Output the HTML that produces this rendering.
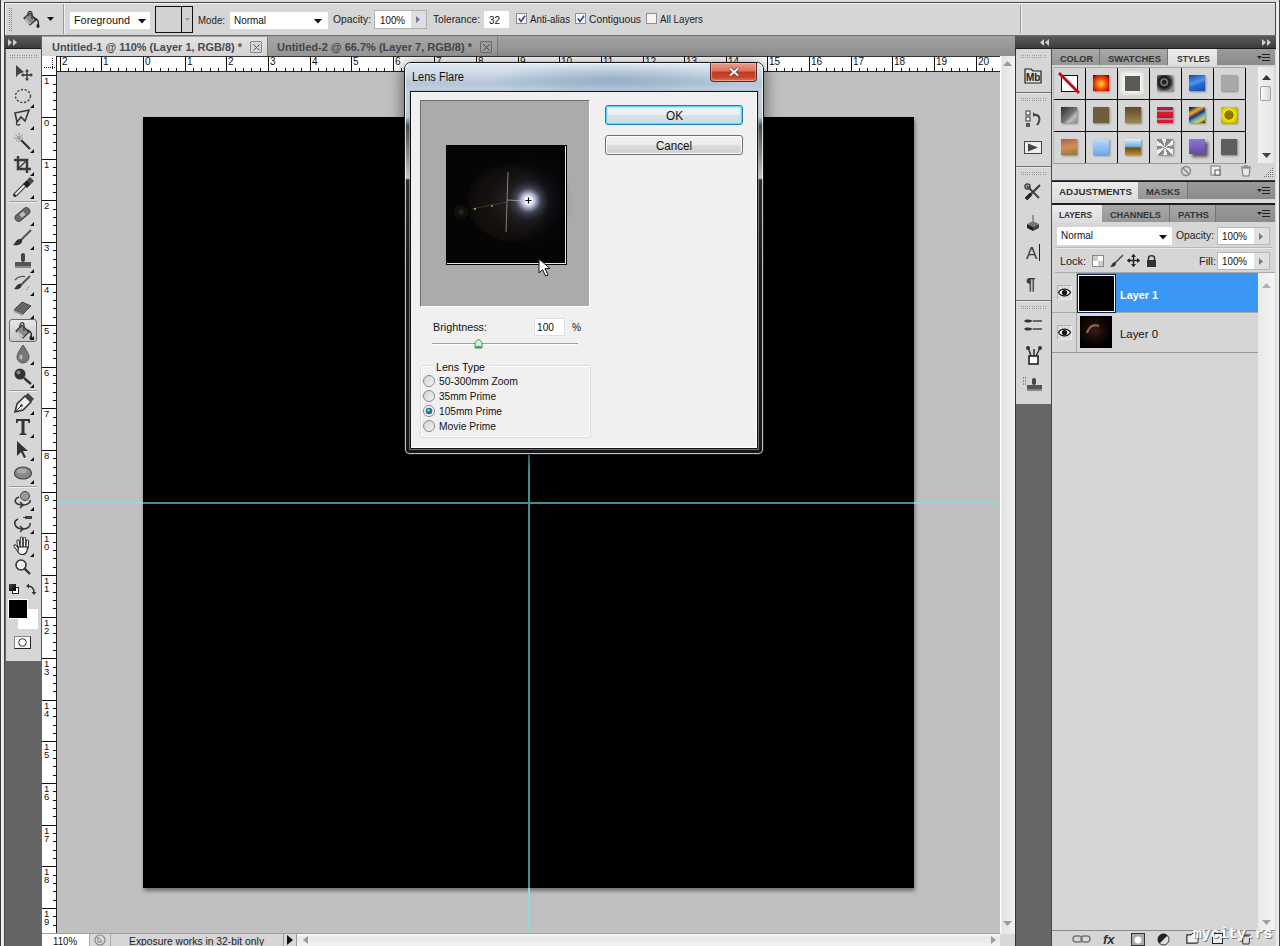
<!DOCTYPE html>
<html><head><meta charset="utf-8">
<style>
*{margin:0;padding:0;box-sizing:border-box}
html,body{width:1280px;height:946px;overflow:hidden;background:#d9d9d9;font-family:"Liberation Sans",sans-serif;font-size:11px;color:#111}
.a{position:absolute}
.t{position:absolute;white-space:nowrap;line-height:1}
svg{position:absolute;overflow:visible}
</style></head><body>
<div class="a" style="left:0px;top:0px;width:1280px;height:946px;background:#ececec;"></div>
<div class="a" style="left:0px;top:0px;width:1280px;height:2px;background:#dcdcdc;"></div>
<div class="a" style="left:0px;top:0px;width:1px;height:946px;background:#3c3c3c;"></div>
<div class="a" style="left:4px;top:2px;width:1px;height:944px;background:#444;"></div>
<div class="a" style="left:4px;top:2px;width:1272px;height:1px;background:#444;"></div>
<div class="a" style="left:1275px;top:2px;width:1px;height:944px;background:#444;"></div>
<div class="a" style="left:1279px;top:0px;width:1px;height:946px;background:#444;"></div>
<div class="a" style="left:5px;top:3px;width:1270px;height:32px;background:#d6d6d6;border-top:1px solid #f4f4f4;border-left:1px solid #f0f0f0"></div>
<div class="a" style="left:5px;top:35px;width:1271px;height:1px;background:#6e6e6e;"></div>
<div class="a" style="left:9px;top:8px;width:1px;height:1px;background:#8a8a8a;"></div>
<div class="a" style="left:11px;top:8px;width:1px;height:1px;background:#8a8a8a;"></div>
<div class="a" style="left:9px;top:10px;width:1px;height:1px;background:#8a8a8a;"></div>
<div class="a" style="left:11px;top:10px;width:1px;height:1px;background:#8a8a8a;"></div>
<div class="a" style="left:9px;top:12px;width:1px;height:1px;background:#8a8a8a;"></div>
<div class="a" style="left:11px;top:12px;width:1px;height:1px;background:#8a8a8a;"></div>
<div class="a" style="left:9px;top:14px;width:1px;height:1px;background:#8a8a8a;"></div>
<div class="a" style="left:11px;top:14px;width:1px;height:1px;background:#8a8a8a;"></div>
<div class="a" style="left:9px;top:16px;width:1px;height:1px;background:#8a8a8a;"></div>
<div class="a" style="left:11px;top:16px;width:1px;height:1px;background:#8a8a8a;"></div>
<div class="a" style="left:9px;top:18px;width:1px;height:1px;background:#8a8a8a;"></div>
<div class="a" style="left:11px;top:18px;width:1px;height:1px;background:#8a8a8a;"></div>
<div class="a" style="left:9px;top:20px;width:1px;height:1px;background:#8a8a8a;"></div>
<div class="a" style="left:11px;top:20px;width:1px;height:1px;background:#8a8a8a;"></div>
<div class="a" style="left:9px;top:22px;width:1px;height:1px;background:#8a8a8a;"></div>
<div class="a" style="left:11px;top:22px;width:1px;height:1px;background:#8a8a8a;"></div>
<div class="a" style="left:9px;top:24px;width:1px;height:1px;background:#8a8a8a;"></div>
<div class="a" style="left:11px;top:24px;width:1px;height:1px;background:#8a8a8a;"></div>
<div class="a" style="left:9px;top:26px;width:1px;height:1px;background:#8a8a8a;"></div>
<div class="a" style="left:11px;top:26px;width:1px;height:1px;background:#8a8a8a;"></div>
<div class="a" style="left:9px;top:28px;width:1px;height:1px;background:#8a8a8a;"></div>
<div class="a" style="left:11px;top:28px;width:1px;height:1px;background:#8a8a8a;"></div>
<div class="a" style="left:9px;top:30px;width:1px;height:1px;background:#8a8a8a;"></div>
<div class="a" style="left:11px;top:30px;width:1px;height:1px;background:#8a8a8a;"></div>
<svg style="left:17px;top:8px" width="26" height="22" viewBox="0 0 26 22">
<path d="M7 10 L13 5 L19 12 L13 17 Z" fill="#8a8a8a" stroke="#333" stroke-width="1.2"/>
<path d="M8 11 L13 16" stroke="#bbb" stroke-width="2"/>
<path d="M11 8 C10 3 14 2 15 5 L15 11" fill="none" stroke="#333" stroke-width="1.2"/>
<path d="M17 10 C21 11 22 14 21 17" fill="none" stroke="#222" stroke-width="1.5"/>
<ellipse cx="21" cy="18" rx="1.6" ry="2" fill="#222"/>
</svg>
<svg style="left:47px;top:17px" width="8" height="5"><path d="M0 0 H7 L3.5 4 Z" fill="#111"/></svg>
<div class="a" style="left:63px;top:4px;width:1px;height:30px;background:#9a9a9a;"></div>
<div class="a" style="left:64px;top:4px;width:1px;height:30px;background:#efefef;"></div>
<div class="a" style="left:70px;top:12px;width:80px;height:17px;background:#fff;"></div>
<div class="t" style="left:74px;top:14.69px;font-size:11px;color:#111;transform:scaleX(0.985);transform-origin:0 0;">Foreground</div>
<svg style="left:138px;top:19px" width="9" height="5"><path d="M0 0 H8 L4 4.5 Z" fill="#111"/></svg>
<div class="a" style="left:155px;top:6px;width:38px;height:27px;background:#d2d2d2;border:1px solid #111"></div>
<div class="a" style="left:181px;top:6px;width:1px;height:27px;background:#111;"></div>
<svg style="left:185px;top:18px" width="6" height="4"><path d="M0 0 H5 L2.5 3 Z" fill="#999"/></svg>
<div class="t" style="left:198px;top:14.69px;font-size:11px;color:#222;transform:scaleX(0.883);transform-origin:0 0;">Mode:</div>
<div class="a" style="left:230px;top:12px;width:98px;height:17px;background:#fff;"></div>
<div class="t" style="left:234px;top:14.69px;font-size:11px;color:#111;transform:scaleX(0.903);transform-origin:0 0;">Normal</div>
<svg style="left:314px;top:19px" width="9" height="5"><path d="M0 0 H8 L4 4.5 Z" fill="#111"/></svg>
<div class="t" style="left:333px;top:13.69px;font-size:11px;color:#222;transform:scaleX(0.942);transform-origin:0 0;">Opacity:</div>
<div class="a" style="left:374px;top:10px;width:53px;height:19px;background:#cfcfcf;border:1px solid #b0b0b0"></div>
<div class="a" style="left:375px;top:11px;width:36px;height:17px;background:#fff;"></div>
<div class="t" style="left:380px;top:14.69px;font-size:11px;color:#111;transform:scaleX(0.889);transform-origin:0 0;">100%</div>
<div class="a" style="left:411px;top:11px;width:15px;height:17px;background:#dedede;"></div>
<svg style="left:416px;top:16px" width="5" height="7"><path d="M0 0 L4 3.5 L0 7 Z" fill="#6a7a9a"/></svg>
<div class="t" style="left:433px;top:13.69px;font-size:11px;color:#222;transform:scaleX(0.926);transform-origin:0 0;">Tolerance:</div>
<div class="a" style="left:484px;top:11px;width:25px;height:17px;background:#fff;"></div>
<div class="t" style="left:489px;top:14.69px;font-size:11px;color:#111;transform:scaleX(0.899);transform-origin:0 0;">32</div>
<div class="a" style="left:516px;top:13px;width:11px;height:11px;background:#f4f4f4;border:1px solid #8f8f8f"></div>
<svg style="left:518px;top:15px" width="8" height="8"><path d="M0.8 3.5 L3 6.5 L7 0.8" fill="none" stroke="#2a3f8a" stroke-width="1.5"/></svg>
<div class="t" style="left:530px;top:13.69px;font-size:11px;color:#222;transform:scaleX(0.884);transform-origin:0 0;">Anti-alias</div>
<div class="a" style="left:575px;top:13px;width:11px;height:11px;background:#f4f4f4;border:1px solid #8f8f8f"></div>
<svg style="left:577px;top:15px" width="8" height="8"><path d="M0.8 3.5 L3 6.5 L7 0.8" fill="none" stroke="#2a3f8a" stroke-width="1.5"/></svg>
<div class="t" style="left:589px;top:13.69px;font-size:11px;color:#222;transform:scaleX(0.934);transform-origin:0 0;">Contiguous</div>
<div class="a" style="left:646px;top:13px;width:11px;height:11px;background:#f4f4f4;border:1px solid #8f8f8f"></div>
<div class="t" style="left:660px;top:13.69px;font-size:11px;color:#222;transform:scaleX(0.890);transform-origin:0 0;">All Layers</div>
<div class="a" style="left:1020px;top:5px;width:1px;height:28px;background:#9a9a9a;"></div>
<div class="a" style="left:1021px;top:5px;width:1px;height:28px;background:#eeeeee;"></div>
<div class="a" style="left:5px;top:36px;width:37px;height:910px;background:#656565;"></div>
<div class="a" style="left:5px;top:36px;width:36px;height:12px;background:linear-gradient(#595959,#3c3c3c);"></div>
<div class="a" style="left:5px;top:48px;width:36px;height:1px;background:#1e1e1e;"></div>
<svg style="left:8px;top:39px" width="12" height="8"><path d="M0 0 L4 3.5 L0 7Z M5 0 L9 3.5 L5 7Z" fill="#cfcfcf"/></svg>
<div class="a" style="left:6px;top:49px;width:35px;height:612px;background:#d6d6d6;"></div>
<div class="a" style="left:41px;top:49px;width:1px;height:612px;background:#555;"></div>
<div class="a" style="left:42px;top:36px;width:973px;height:20px;background:linear-gradient(#a2a2a2,#8f8f8f);"></div>
<div class="a" style="left:42px;top:37px;width:226px;height:19px;background:linear-gradient(#e2e2e2,#d4d4d4);"></div>
<div class="t" style="left:52px;top:41.69px;font-size:11px;color:#474b53;font-weight:bold;transform:scaleX(0.994);transform-origin:0 0;">Untitled-1 @ 110% (Layer 1, RGB/8) *</div>
<div class="a" style="left:250px;top:41px;width:12px;height:12px;background:#d6d6d6;border:1px solid #8a8a8a;border-radius:1px"></div>
<svg style="left:253px;top:44px" width="7" height="7"><path d="M0.5 0.5 L6.5 6.5 M6.5 0.5 L0.5 6.5" stroke="#555" stroke-width="1"/></svg>
<div class="a" style="left:268px;top:37px;width:229px;height:19px;background:linear-gradient(#a6a6a6,#949494);"></div>
<div class="a" style="left:267px;top:37px;width:1px;height:19px;background:#7a7a7a;"></div>
<div class="a" style="left:497px;top:37px;width:1px;height:19px;background:#7a7a7a;"></div>
<div class="t" style="left:277px;top:41.69px;font-size:11px;color:#42454a;font-weight:bold;transform:scaleX(1.001);transform-origin:0 0;">Untitled-2 @ 66.7% (Layer 7, RGB/8) *</div>
<div class="a" style="left:480px;top:41px;width:12px;height:12px;background:#9c9c9c;border:1px solid #6a6a6a;border-radius:1px"></div>
<svg style="left:483px;top:44px" width="7" height="7"><path d="M0.5 0.5 L6.5 6.5 M6.5 0.5 L0.5 6.5" stroke="#444" stroke-width="1"/></svg>
<div class="a" style="left:42px;top:56px;width:958px;height:15px;background:#fff;"></div>
<div class="a" style="left:42px;top:56px;width:958px;height:1px;background:#333;"></div>
<div class="a" style="left:42px;top:71px;width:958px;height:1px;background:#222;"></div>
<div class="a" style="left:42px;top:71px;width:15px;height:862px;background:#fff;"></div>
<div class="a" style="left:56px;top:71px;width:1px;height:862px;background:#222;"></div>
<div class="a" style="left:42px;top:56px;width:15px;height:15px;background:#fff;"></div>
<div class="a" style="left:56px;top:56px;width:1px;height:15px;background:#222;"></div>
<div class="a" style="left:44px;top:67px;width:1px;height:1px;background:#222;"></div>
<div class="a" style="left:46px;top:67px;width:1px;height:1px;background:#222;"></div>
<div class="a" style="left:48px;top:67px;width:1px;height:1px;background:#222;"></div>
<div class="a" style="left:50px;top:67px;width:1px;height:1px;background:#222;"></div>
<div class="a" style="left:52px;top:67px;width:1px;height:1px;background:#222;"></div>
<div class="a" style="left:54px;top:67px;width:1px;height:1px;background:#222;"></div>
<div class="a" style="left:52px;top:58px;width:1px;height:1px;background:#222;"></div>
<div class="a" style="left:52px;top:60px;width:1px;height:1px;background:#222;"></div>
<div class="a" style="left:52px;top:62px;width:1px;height:1px;background:#222;"></div>
<div class="a" style="left:52px;top:64px;width:1px;height:1px;background:#222;"></div>
<div class="a" style="left:52px;top:66px;width:1px;height:1px;background:#222;"></div>
<div class="a" style="left:52px;top:68px;width:1px;height:1px;background:#222;"></div>
<div class="a" style="left:60px;top:56px;width:1px;height:15px;background:#111;"></div>
<div class="a" style="left:68px;top:68px;width:1px;height:3px;background:#111;"></div>
<div class="a" style="left:76px;top:68px;width:1px;height:3px;background:#111;"></div>
<div class="a" style="left:85px;top:68px;width:1px;height:3px;background:#111;"></div>
<div class="a" style="left:93px;top:68px;width:1px;height:3px;background:#111;"></div>
<div class="t" style="left:62px;top:56.53px;font-size:10px;color:#111;">2</div>
<div class="a" style="left:101px;top:56px;width:1px;height:15px;background:#111;"></div>
<div class="a" style="left:110px;top:68px;width:1px;height:3px;background:#111;"></div>
<div class="a" style="left:118px;top:68px;width:1px;height:3px;background:#111;"></div>
<div class="a" style="left:126px;top:68px;width:1px;height:3px;background:#111;"></div>
<div class="a" style="left:135px;top:68px;width:1px;height:3px;background:#111;"></div>
<div class="t" style="left:103px;top:56.53px;font-size:10px;color:#111;">1</div>
<div class="a" style="left:143px;top:56px;width:1px;height:15px;background:#111;"></div>
<div class="a" style="left:151px;top:68px;width:1px;height:3px;background:#111;"></div>
<div class="a" style="left:160px;top:68px;width:1px;height:3px;background:#111;"></div>
<div class="a" style="left:168px;top:68px;width:1px;height:3px;background:#111;"></div>
<div class="a" style="left:176px;top:68px;width:1px;height:3px;background:#111;"></div>
<div class="t" style="left:145px;top:56.53px;font-size:10px;color:#111;">0</div>
<div class="a" style="left:185px;top:56px;width:1px;height:15px;background:#111;"></div>
<div class="a" style="left:193px;top:68px;width:1px;height:3px;background:#111;"></div>
<div class="a" style="left:201px;top:68px;width:1px;height:3px;background:#111;"></div>
<div class="a" style="left:210px;top:68px;width:1px;height:3px;background:#111;"></div>
<div class="a" style="left:218px;top:68px;width:1px;height:3px;background:#111;"></div>
<div class="t" style="left:187px;top:56.53px;font-size:10px;color:#111;">1</div>
<div class="a" style="left:226px;top:56px;width:1px;height:15px;background:#111;"></div>
<div class="a" style="left:235px;top:68px;width:1px;height:3px;background:#111;"></div>
<div class="a" style="left:243px;top:68px;width:1px;height:3px;background:#111;"></div>
<div class="a" style="left:251px;top:68px;width:1px;height:3px;background:#111;"></div>
<div class="a" style="left:260px;top:68px;width:1px;height:3px;background:#111;"></div>
<div class="t" style="left:228px;top:56.53px;font-size:10px;color:#111;">2</div>
<div class="a" style="left:268px;top:56px;width:1px;height:15px;background:#111;"></div>
<div class="a" style="left:276px;top:68px;width:1px;height:3px;background:#111;"></div>
<div class="a" style="left:285px;top:68px;width:1px;height:3px;background:#111;"></div>
<div class="a" style="left:293px;top:68px;width:1px;height:3px;background:#111;"></div>
<div class="a" style="left:301px;top:68px;width:1px;height:3px;background:#111;"></div>
<div class="t" style="left:270px;top:56.53px;font-size:10px;color:#111;">3</div>
<div class="a" style="left:310px;top:56px;width:1px;height:15px;background:#111;"></div>
<div class="a" style="left:318px;top:68px;width:1px;height:3px;background:#111;"></div>
<div class="a" style="left:326px;top:68px;width:1px;height:3px;background:#111;"></div>
<div class="a" style="left:334px;top:68px;width:1px;height:3px;background:#111;"></div>
<div class="a" style="left:343px;top:68px;width:1px;height:3px;background:#111;"></div>
<div class="t" style="left:312px;top:56.53px;font-size:10px;color:#111;">4</div>
<div class="a" style="left:351px;top:56px;width:1px;height:15px;background:#111;"></div>
<div class="a" style="left:359px;top:68px;width:1px;height:3px;background:#111;"></div>
<div class="a" style="left:368px;top:68px;width:1px;height:3px;background:#111;"></div>
<div class="a" style="left:376px;top:68px;width:1px;height:3px;background:#111;"></div>
<div class="a" style="left:384px;top:68px;width:1px;height:3px;background:#111;"></div>
<div class="t" style="left:353px;top:56.53px;font-size:10px;color:#111;">5</div>
<div class="a" style="left:393px;top:56px;width:1px;height:15px;background:#111;"></div>
<div class="a" style="left:401px;top:68px;width:1px;height:3px;background:#111;"></div>
<div class="a" style="left:409px;top:68px;width:1px;height:3px;background:#111;"></div>
<div class="a" style="left:418px;top:68px;width:1px;height:3px;background:#111;"></div>
<div class="a" style="left:426px;top:68px;width:1px;height:3px;background:#111;"></div>
<div class="t" style="left:395px;top:56.53px;font-size:10px;color:#111;">6</div>
<div class="a" style="left:434px;top:56px;width:1px;height:15px;background:#111;"></div>
<div class="a" style="left:443px;top:68px;width:1px;height:3px;background:#111;"></div>
<div class="a" style="left:451px;top:68px;width:1px;height:3px;background:#111;"></div>
<div class="a" style="left:459px;top:68px;width:1px;height:3px;background:#111;"></div>
<div class="a" style="left:468px;top:68px;width:1px;height:3px;background:#111;"></div>
<div class="t" style="left:436px;top:56.53px;font-size:10px;color:#111;">7</div>
<div class="a" style="left:476px;top:56px;width:1px;height:15px;background:#111;"></div>
<div class="a" style="left:484px;top:68px;width:1px;height:3px;background:#111;"></div>
<div class="a" style="left:493px;top:68px;width:1px;height:3px;background:#111;"></div>
<div class="a" style="left:501px;top:68px;width:1px;height:3px;background:#111;"></div>
<div class="a" style="left:509px;top:68px;width:1px;height:3px;background:#111;"></div>
<div class="t" style="left:478px;top:56.53px;font-size:10px;color:#111;">8</div>
<div class="a" style="left:518px;top:56px;width:1px;height:15px;background:#111;"></div>
<div class="a" style="left:526px;top:68px;width:1px;height:3px;background:#111;"></div>
<div class="a" style="left:534px;top:68px;width:1px;height:3px;background:#111;"></div>
<div class="a" style="left:543px;top:68px;width:1px;height:3px;background:#111;"></div>
<div class="a" style="left:551px;top:68px;width:1px;height:3px;background:#111;"></div>
<div class="t" style="left:520px;top:56.53px;font-size:10px;color:#111;">9</div>
<div class="a" style="left:559px;top:56px;width:1px;height:15px;background:#111;"></div>
<div class="a" style="left:568px;top:68px;width:1px;height:3px;background:#111;"></div>
<div class="a" style="left:576px;top:68px;width:1px;height:3px;background:#111;"></div>
<div class="a" style="left:584px;top:68px;width:1px;height:3px;background:#111;"></div>
<div class="a" style="left:593px;top:68px;width:1px;height:3px;background:#111;"></div>
<div class="t" style="left:561px;top:56.53px;font-size:10px;color:#111;">10</div>
<div class="a" style="left:601px;top:56px;width:1px;height:15px;background:#111;"></div>
<div class="a" style="left:609px;top:68px;width:1px;height:3px;background:#111;"></div>
<div class="a" style="left:618px;top:68px;width:1px;height:3px;background:#111;"></div>
<div class="a" style="left:626px;top:68px;width:1px;height:3px;background:#111;"></div>
<div class="a" style="left:634px;top:68px;width:1px;height:3px;background:#111;"></div>
<div class="t" style="left:603px;top:56.53px;font-size:10px;color:#111;">11</div>
<div class="a" style="left:643px;top:56px;width:1px;height:15px;background:#111;"></div>
<div class="a" style="left:651px;top:68px;width:1px;height:3px;background:#111;"></div>
<div class="a" style="left:659px;top:68px;width:1px;height:3px;background:#111;"></div>
<div class="a" style="left:668px;top:68px;width:1px;height:3px;background:#111;"></div>
<div class="a" style="left:676px;top:68px;width:1px;height:3px;background:#111;"></div>
<div class="t" style="left:645px;top:56.53px;font-size:10px;color:#111;">12</div>
<div class="a" style="left:684px;top:56px;width:1px;height:15px;background:#111;"></div>
<div class="a" style="left:693px;top:68px;width:1px;height:3px;background:#111;"></div>
<div class="a" style="left:701px;top:68px;width:1px;height:3px;background:#111;"></div>
<div class="a" style="left:709px;top:68px;width:1px;height:3px;background:#111;"></div>
<div class="a" style="left:717px;top:68px;width:1px;height:3px;background:#111;"></div>
<div class="t" style="left:686px;top:56.53px;font-size:10px;color:#111;">13</div>
<div class="a" style="left:726px;top:56px;width:1px;height:15px;background:#111;"></div>
<div class="a" style="left:734px;top:68px;width:1px;height:3px;background:#111;"></div>
<div class="a" style="left:742px;top:68px;width:1px;height:3px;background:#111;"></div>
<div class="a" style="left:751px;top:68px;width:1px;height:3px;background:#111;"></div>
<div class="a" style="left:759px;top:68px;width:1px;height:3px;background:#111;"></div>
<div class="t" style="left:728px;top:56.53px;font-size:10px;color:#111;">14</div>
<div class="a" style="left:767px;top:56px;width:1px;height:15px;background:#111;"></div>
<div class="a" style="left:776px;top:68px;width:1px;height:3px;background:#111;"></div>
<div class="a" style="left:784px;top:68px;width:1px;height:3px;background:#111;"></div>
<div class="a" style="left:792px;top:68px;width:1px;height:3px;background:#111;"></div>
<div class="a" style="left:801px;top:68px;width:1px;height:3px;background:#111;"></div>
<div class="t" style="left:769px;top:56.53px;font-size:10px;color:#111;">15</div>
<div class="a" style="left:809px;top:56px;width:1px;height:15px;background:#111;"></div>
<div class="a" style="left:817px;top:68px;width:1px;height:3px;background:#111;"></div>
<div class="a" style="left:826px;top:68px;width:1px;height:3px;background:#111;"></div>
<div class="a" style="left:834px;top:68px;width:1px;height:3px;background:#111;"></div>
<div class="a" style="left:842px;top:68px;width:1px;height:3px;background:#111;"></div>
<div class="t" style="left:811px;top:56.53px;font-size:10px;color:#111;">16</div>
<div class="a" style="left:851px;top:56px;width:1px;height:15px;background:#111;"></div>
<div class="a" style="left:859px;top:68px;width:1px;height:3px;background:#111;"></div>
<div class="a" style="left:867px;top:68px;width:1px;height:3px;background:#111;"></div>
<div class="a" style="left:876px;top:68px;width:1px;height:3px;background:#111;"></div>
<div class="a" style="left:884px;top:68px;width:1px;height:3px;background:#111;"></div>
<div class="t" style="left:853px;top:56.53px;font-size:10px;color:#111;">17</div>
<div class="a" style="left:892px;top:56px;width:1px;height:15px;background:#111;"></div>
<div class="a" style="left:901px;top:68px;width:1px;height:3px;background:#111;"></div>
<div class="a" style="left:909px;top:68px;width:1px;height:3px;background:#111;"></div>
<div class="a" style="left:917px;top:68px;width:1px;height:3px;background:#111;"></div>
<div class="a" style="left:926px;top:68px;width:1px;height:3px;background:#111;"></div>
<div class="t" style="left:894px;top:56.53px;font-size:10px;color:#111;">18</div>
<div class="a" style="left:934px;top:56px;width:1px;height:15px;background:#111;"></div>
<div class="a" style="left:942px;top:68px;width:1px;height:3px;background:#111;"></div>
<div class="a" style="left:951px;top:68px;width:1px;height:3px;background:#111;"></div>
<div class="a" style="left:959px;top:68px;width:1px;height:3px;background:#111;"></div>
<div class="a" style="left:967px;top:68px;width:1px;height:3px;background:#111;"></div>
<div class="t" style="left:936px;top:56.53px;font-size:10px;color:#111;">19</div>
<div class="a" style="left:976px;top:56px;width:1px;height:15px;background:#111;"></div>
<div class="a" style="left:984px;top:68px;width:1px;height:3px;background:#111;"></div>
<div class="a" style="left:992px;top:68px;width:1px;height:3px;background:#111;"></div>
<div class="t" style="left:978px;top:56.53px;font-size:10px;color:#111;">20</div>
<div class="a" style="left:42px;top:75px;width:15px;height:1px;background:#111;"></div>
<div class="a" style="left:53px;top:84px;width:3px;height:1px;background:#111;"></div>
<div class="a" style="left:53px;top:92px;width:3px;height:1px;background:#111;"></div>
<div class="a" style="left:53px;top:100px;width:3px;height:1px;background:#111;"></div>
<div class="a" style="left:53px;top:109px;width:3px;height:1px;background:#111;"></div>
<div class="t" style="left:44px;top:75.96px;font-size:9.5px;color:#111;">1</div>
<div class="a" style="left:42px;top:117px;width:15px;height:1px;background:#111;"></div>
<div class="a" style="left:53px;top:125px;width:3px;height:1px;background:#111;"></div>
<div class="a" style="left:53px;top:134px;width:3px;height:1px;background:#111;"></div>
<div class="a" style="left:53px;top:142px;width:3px;height:1px;background:#111;"></div>
<div class="a" style="left:53px;top:150px;width:3px;height:1px;background:#111;"></div>
<div class="t" style="left:44px;top:117.96px;font-size:9.5px;color:#111;">0</div>
<div class="a" style="left:42px;top:159px;width:15px;height:1px;background:#111;"></div>
<div class="a" style="left:53px;top:167px;width:3px;height:1px;background:#111;"></div>
<div class="a" style="left:53px;top:175px;width:3px;height:1px;background:#111;"></div>
<div class="a" style="left:53px;top:184px;width:3px;height:1px;background:#111;"></div>
<div class="a" style="left:53px;top:192px;width:3px;height:1px;background:#111;"></div>
<div class="t" style="left:44px;top:159.96px;font-size:9.5px;color:#111;">1</div>
<div class="a" style="left:42px;top:200px;width:15px;height:1px;background:#111;"></div>
<div class="a" style="left:53px;top:209px;width:3px;height:1px;background:#111;"></div>
<div class="a" style="left:53px;top:217px;width:3px;height:1px;background:#111;"></div>
<div class="a" style="left:53px;top:225px;width:3px;height:1px;background:#111;"></div>
<div class="a" style="left:53px;top:234px;width:3px;height:1px;background:#111;"></div>
<div class="t" style="left:44px;top:200.96px;font-size:9.5px;color:#111;">2</div>
<div class="a" style="left:42px;top:242px;width:15px;height:1px;background:#111;"></div>
<div class="a" style="left:53px;top:250px;width:3px;height:1px;background:#111;"></div>
<div class="a" style="left:53px;top:259px;width:3px;height:1px;background:#111;"></div>
<div class="a" style="left:53px;top:267px;width:3px;height:1px;background:#111;"></div>
<div class="a" style="left:53px;top:275px;width:3px;height:1px;background:#111;"></div>
<div class="t" style="left:44px;top:242.96px;font-size:9.5px;color:#111;">3</div>
<div class="a" style="left:42px;top:284px;width:15px;height:1px;background:#111;"></div>
<div class="a" style="left:53px;top:292px;width:3px;height:1px;background:#111;"></div>
<div class="a" style="left:53px;top:300px;width:3px;height:1px;background:#111;"></div>
<div class="a" style="left:53px;top:308px;width:3px;height:1px;background:#111;"></div>
<div class="a" style="left:53px;top:317px;width:3px;height:1px;background:#111;"></div>
<div class="t" style="left:44px;top:284.96px;font-size:9.5px;color:#111;">4</div>
<div class="a" style="left:42px;top:325px;width:15px;height:1px;background:#111;"></div>
<div class="a" style="left:53px;top:333px;width:3px;height:1px;background:#111;"></div>
<div class="a" style="left:53px;top:342px;width:3px;height:1px;background:#111;"></div>
<div class="a" style="left:53px;top:350px;width:3px;height:1px;background:#111;"></div>
<div class="a" style="left:53px;top:358px;width:3px;height:1px;background:#111;"></div>
<div class="t" style="left:44px;top:325.96px;font-size:9.5px;color:#111;">5</div>
<div class="a" style="left:42px;top:367px;width:15px;height:1px;background:#111;"></div>
<div class="a" style="left:53px;top:375px;width:3px;height:1px;background:#111;"></div>
<div class="a" style="left:53px;top:383px;width:3px;height:1px;background:#111;"></div>
<div class="a" style="left:53px;top:392px;width:3px;height:1px;background:#111;"></div>
<div class="a" style="left:53px;top:400px;width:3px;height:1px;background:#111;"></div>
<div class="t" style="left:44px;top:367.96px;font-size:9.5px;color:#111;">6</div>
<div class="a" style="left:42px;top:408px;width:15px;height:1px;background:#111;"></div>
<div class="a" style="left:53px;top:417px;width:3px;height:1px;background:#111;"></div>
<div class="a" style="left:53px;top:425px;width:3px;height:1px;background:#111;"></div>
<div class="a" style="left:53px;top:433px;width:3px;height:1px;background:#111;"></div>
<div class="a" style="left:53px;top:442px;width:3px;height:1px;background:#111;"></div>
<div class="t" style="left:44px;top:408.96px;font-size:9.5px;color:#111;">7</div>
<div class="a" style="left:42px;top:450px;width:15px;height:1px;background:#111;"></div>
<div class="a" style="left:53px;top:458px;width:3px;height:1px;background:#111;"></div>
<div class="a" style="left:53px;top:467px;width:3px;height:1px;background:#111;"></div>
<div class="a" style="left:53px;top:475px;width:3px;height:1px;background:#111;"></div>
<div class="a" style="left:53px;top:483px;width:3px;height:1px;background:#111;"></div>
<div class="t" style="left:44px;top:450.96px;font-size:9.5px;color:#111;">8</div>
<div class="a" style="left:42px;top:492px;width:15px;height:1px;background:#111;"></div>
<div class="a" style="left:53px;top:500px;width:3px;height:1px;background:#111;"></div>
<div class="a" style="left:53px;top:508px;width:3px;height:1px;background:#111;"></div>
<div class="a" style="left:53px;top:517px;width:3px;height:1px;background:#111;"></div>
<div class="a" style="left:53px;top:525px;width:3px;height:1px;background:#111;"></div>
<div class="t" style="left:44px;top:492.96px;font-size:9.5px;color:#111;">9</div>
<div class="a" style="left:42px;top:533px;width:15px;height:1px;background:#111;"></div>
<div class="a" style="left:53px;top:542px;width:3px;height:1px;background:#111;"></div>
<div class="a" style="left:53px;top:550px;width:3px;height:1px;background:#111;"></div>
<div class="a" style="left:53px;top:558px;width:3px;height:1px;background:#111;"></div>
<div class="a" style="left:53px;top:567px;width:3px;height:1px;background:#111;"></div>
<div class="t" style="left:44px;top:533.96px;font-size:9.5px;color:#111;">1</div>
<div class="t" style="left:44px;top:541.96px;font-size:9.5px;color:#111;">0</div>
<div class="a" style="left:42px;top:575px;width:15px;height:1px;background:#111;"></div>
<div class="a" style="left:53px;top:583px;width:3px;height:1px;background:#111;"></div>
<div class="a" style="left:53px;top:592px;width:3px;height:1px;background:#111;"></div>
<div class="a" style="left:53px;top:600px;width:3px;height:1px;background:#111;"></div>
<div class="a" style="left:53px;top:608px;width:3px;height:1px;background:#111;"></div>
<div class="t" style="left:44px;top:575.96px;font-size:9.5px;color:#111;">1</div>
<div class="t" style="left:44px;top:583.96px;font-size:9.5px;color:#111;">1</div>
<div class="a" style="left:42px;top:617px;width:15px;height:1px;background:#111;"></div>
<div class="a" style="left:53px;top:625px;width:3px;height:1px;background:#111;"></div>
<div class="a" style="left:53px;top:633px;width:3px;height:1px;background:#111;"></div>
<div class="a" style="left:53px;top:642px;width:3px;height:1px;background:#111;"></div>
<div class="a" style="left:53px;top:650px;width:3px;height:1px;background:#111;"></div>
<div class="t" style="left:44px;top:617.96px;font-size:9.5px;color:#111;">1</div>
<div class="t" style="left:44px;top:625.96px;font-size:9.5px;color:#111;">2</div>
<div class="a" style="left:42px;top:658px;width:15px;height:1px;background:#111;"></div>
<div class="a" style="left:53px;top:667px;width:3px;height:1px;background:#111;"></div>
<div class="a" style="left:53px;top:675px;width:3px;height:1px;background:#111;"></div>
<div class="a" style="left:53px;top:683px;width:3px;height:1px;background:#111;"></div>
<div class="a" style="left:53px;top:691px;width:3px;height:1px;background:#111;"></div>
<div class="t" style="left:44px;top:658.96px;font-size:9.5px;color:#111;">1</div>
<div class="t" style="left:44px;top:666.96px;font-size:9.5px;color:#111;">3</div>
<div class="a" style="left:42px;top:700px;width:15px;height:1px;background:#111;"></div>
<div class="a" style="left:53px;top:708px;width:3px;height:1px;background:#111;"></div>
<div class="a" style="left:53px;top:716px;width:3px;height:1px;background:#111;"></div>
<div class="a" style="left:53px;top:725px;width:3px;height:1px;background:#111;"></div>
<div class="a" style="left:53px;top:733px;width:3px;height:1px;background:#111;"></div>
<div class="t" style="left:44px;top:700.96px;font-size:9.5px;color:#111;">1</div>
<div class="t" style="left:44px;top:708.96px;font-size:9.5px;color:#111;">4</div>
<div class="a" style="left:42px;top:741px;width:15px;height:1px;background:#111;"></div>
<div class="a" style="left:53px;top:750px;width:3px;height:1px;background:#111;"></div>
<div class="a" style="left:53px;top:758px;width:3px;height:1px;background:#111;"></div>
<div class="a" style="left:53px;top:766px;width:3px;height:1px;background:#111;"></div>
<div class="a" style="left:53px;top:775px;width:3px;height:1px;background:#111;"></div>
<div class="t" style="left:44px;top:741.96px;font-size:9.5px;color:#111;">1</div>
<div class="t" style="left:44px;top:749.96px;font-size:9.5px;color:#111;">5</div>
<div class="a" style="left:42px;top:783px;width:15px;height:1px;background:#111;"></div>
<div class="a" style="left:53px;top:791px;width:3px;height:1px;background:#111;"></div>
<div class="a" style="left:53px;top:800px;width:3px;height:1px;background:#111;"></div>
<div class="a" style="left:53px;top:808px;width:3px;height:1px;background:#111;"></div>
<div class="a" style="left:53px;top:816px;width:3px;height:1px;background:#111;"></div>
<div class="t" style="left:44px;top:783.96px;font-size:9.5px;color:#111;">1</div>
<div class="t" style="left:44px;top:791.96px;font-size:9.5px;color:#111;">6</div>
<div class="a" style="left:42px;top:825px;width:15px;height:1px;background:#111;"></div>
<div class="a" style="left:53px;top:833px;width:3px;height:1px;background:#111;"></div>
<div class="a" style="left:53px;top:841px;width:3px;height:1px;background:#111;"></div>
<div class="a" style="left:53px;top:850px;width:3px;height:1px;background:#111;"></div>
<div class="a" style="left:53px;top:858px;width:3px;height:1px;background:#111;"></div>
<div class="t" style="left:44px;top:825.96px;font-size:9.5px;color:#111;">1</div>
<div class="t" style="left:44px;top:833.96px;font-size:9.5px;color:#111;">7</div>
<div class="a" style="left:42px;top:866px;width:15px;height:1px;background:#111;"></div>
<div class="a" style="left:53px;top:875px;width:3px;height:1px;background:#111;"></div>
<div class="a" style="left:53px;top:883px;width:3px;height:1px;background:#111;"></div>
<div class="a" style="left:53px;top:891px;width:3px;height:1px;background:#111;"></div>
<div class="a" style="left:53px;top:900px;width:3px;height:1px;background:#111;"></div>
<div class="t" style="left:44px;top:866.96px;font-size:9.5px;color:#111;">1</div>
<div class="t" style="left:44px;top:874.96px;font-size:9.5px;color:#111;">8</div>
<div class="a" style="left:42px;top:908px;width:15px;height:1px;background:#111;"></div>
<div class="a" style="left:53px;top:916px;width:3px;height:1px;background:#111;"></div>
<div class="a" style="left:53px;top:925px;width:3px;height:1px;background:#111;"></div>
<div class="t" style="left:44px;top:908.96px;font-size:9.5px;color:#111;">1</div>
<div class="t" style="left:44px;top:916.96px;font-size:9.5px;color:#111;">9</div>
<div class="a" style="left:57px;top:72px;width:943px;height:861px;background:#c0c0c0;"></div>
<div class="a" style="left:143px;top:117px;width:771px;height:771px;background:#000;box-shadow:1px 3px 4px rgba(0,0,0,.42)"></div>
<div class="a" style="left:57px;top:502px;width:86px;height:2px;background:#8cdada;"></div>
<div class="a" style="left:143px;top:502px;width:771px;height:2px;background:#3f8f8c;"></div>
<div class="a" style="left:914px;top:502px;width:86px;height:2px;background:#8cdada;"></div>
<div class="a" style="left:528px;top:72px;width:2px;height:45px;background:#8cdada;"></div>
<div class="a" style="left:528px;top:117px;width:2px;height:771px;background:#3f8f8c;"></div>
<div class="a" style="left:528px;top:888px;width:2px;height:45px;background:#8cdada;"></div>
<div class="a" style="left:1000px;top:56px;width:15px;height:877px;background:linear-gradient(90deg,#fff 0,#fff 1px,#e2e2e2 2px,#f2f2f2);"></div>
<svg style="left:1003px;top:61px" width="9" height="5"><path d="M0 5 L4.5 0 L9 5Z" fill="#9a9a9a"/></svg>
<svg style="left:1003px;top:921px" width="9" height="5"><path d="M0 0 L4.5 5 L9 0Z" fill="#9a9a9a"/></svg>
<div class="a" style="left:297px;top:934px;width:703px;height:12px;background:linear-gradient(#fafafa,#e8e8e8 30%,#f2f2f2);"></div>
<svg style="left:303px;top:936px" width="5" height="8"><path d="M5 0 L0 4 L5 8Z" fill="#9a9a9a"/></svg>
<svg style="left:991px;top:936px" width="5" height="8"><path d="M0 0 L5 4 L0 8Z" fill="#9a9a9a"/></svg>
<div class="a" style="left:1000px;top:934px;width:15px;height:12px;background:#d8d8d8;"></div>
<div class="a" style="left:42px;top:933px;width:958px;height:1px;background:#a0a0a0;"></div>
<div class="a" style="left:42px;top:934px;width:47px;height:12px;background:#fff;"></div>
<div class="t" style="left:53px;top:935.69px;font-size:11px;color:#111;transform:scaleX(0.879);transform-origin:0 0;">110%</div>
<div class="a" style="left:89px;top:934px;width:22px;height:12px;background:#d9d9d9;border-left:1px solid #aaa;border-right:1px solid #aaa"></div>
<svg style="left:94px;top:934px" width="12" height="12"><circle cx="6" cy="6" r="5" fill="none" stroke="#888" stroke-width="1.2"/><path d="M4 3 V8 H8 L6 5Z" fill="none" stroke="#888"/></svg>
<div class="a" style="left:111px;top:934px;width:172px;height:12px;background:#d6d6d6;"></div>
<div class="t" style="left:129px;top:935.69px;font-size:11px;color:#222;transform:scaleX(0.940);transform-origin:0 0;">Exposure works in 32-bit only</div>
<div class="a" style="left:283px;top:934px;width:14px;height:12px;background:#d9d9d9;border-left:1px solid #999;border-right:1px solid #999"></div>
<svg style="left:287px;top:935px" width="7" height="10"><path d="M0 0 L6 5 L0 10Z" fill="#111"/></svg>
<div class="a" style="left:1015px;top:36px;width:261px;height:12px;background:linear-gradient(#5a5a5a,#3b3b3b);"></div>
<div class="a" style="left:1015px;top:48px;width:261px;height:1px;background:#1c1c1c;"></div>
<svg style="left:1040px;top:39px" width="12" height="8"><path d="M4 0 L0 3.5 L4 7Z M9 0 L5 3.5 L9 7Z" fill="#cfcfcf"/></svg>
<svg style="left:1262px;top:39px" width="12" height="8"><path d="M0 0 L4 3.5 L0 7Z M5 0 L9 3.5 L5 7Z" fill="#cfcfcf"/></svg>
<div class="a" style="left:1015px;top:49px;width:37px;height:897px;background:#666;"></div>
<div class="a" style="left:1015px;top:49px;width:1px;height:897px;background:#333;"></div>
<div class="a" style="left:1016px;top:49px;width:35px;height:355px;background:#d6d6d6;"></div>
<div class="a" style="left:1016px;top:92px;width:35px;height:1px;background:#707070;"></div>
<div class="a" style="left:1016px;top:93px;width:35px;height:1px;background:#e6e6e6;"></div>
<div class="a" style="left:1016px;top:166px;width:35px;height:1px;background:#707070;"></div>
<div class="a" style="left:1016px;top:167px;width:35px;height:1px;background:#e6e6e6;"></div>
<div class="a" style="left:1016px;top:300px;width:35px;height:1px;background:#707070;"></div>
<div class="a" style="left:1016px;top:301px;width:35px;height:1px;background:#e6e6e6;"></div>
<div class="a" style="left:1051px;top:49px;width:1px;height:897px;background:#4a4a4a;"></div>
<div class="a" style="left:1052px;top:49px;width:224px;height:897px;background:#d6d6d6;"></div>
<div class="a" style="left:1052px;top:49px;width:223px;height:16px;background:linear-gradient(#9a9a9a,#8a8a8a);"></div>
<div class="a" style="left:1052px;top:49px;width:48px;height:16px;background:linear-gradient(#a8a8a8,#969696);"></div>
<div class="a" style="left:1099px;top:49px;width:1px;height:16px;background:#747474;"></div>
<div class="t" style="left:1060px;top:53.87px;font-size:9.6px;color:#353535;font-weight:bold;transform:scaleX(0.952);transform-origin:0 0;">COLOR</div>
<div class="a" style="left:1100px;top:49px;width:68px;height:16px;background:linear-gradient(#a8a8a8,#969696);"></div>
<div class="a" style="left:1167px;top:49px;width:1px;height:16px;background:#747474;"></div>
<div class="t" style="left:1108px;top:53.87px;font-size:9.6px;color:#353535;font-weight:bold;transform:scaleX(0.987);transform-origin:0 0;">SWATCHES</div>
<div class="a" style="left:1168px;top:49px;width:49px;height:17px;background:linear-gradient(#ececec,#dcdcdc);"></div>
<div class="t" style="left:1177px;top:53.87px;font-size:9.6px;color:#333;font-weight:bold;transform:scaleX(0.884);transform-origin:0 0;">STYLES</div>
<svg style="left:1257px;top:54px" width="14" height="8"><path d="M0 2 H5 L2.5 5Z" fill="#222"/><path d="M5 0.5 H13 M5 3.5 H13 M5 6.5 H13" stroke="#222" stroke-width="1"/></svg>
<div class="a" style="left:1052px;top:66px;width:223px;height:114px;background:#d6d6d6;"></div>
<div class="a" style="left:1053px;top:67px;width:193px;height:97px;background:#d6d6d6;"></div>
<div class="a" style="left:1085px;top:67px;width:1px;height:96px;background:#0a0a0a;"></div>
<div class="a" style="left:1117px;top:67px;width:1px;height:96px;background:#0a0a0a;"></div>
<div class="a" style="left:1149px;top:67px;width:1px;height:96px;background:#0a0a0a;"></div>
<div class="a" style="left:1181px;top:67px;width:1px;height:96px;background:#0a0a0a;"></div>
<div class="a" style="left:1213px;top:67px;width:1px;height:96px;background:#0a0a0a;"></div>
<div class="a" style="left:1245px;top:67px;width:1px;height:96px;background:#0a0a0a;"></div>
<div class="a" style="left:1053px;top:99px;width:193px;height:1px;background:#0a0a0a;"></div>
<div class="a" style="left:1053px;top:131px;width:193px;height:1px;background:#0a0a0a;"></div>
<div class="a" style="left:1053px;top:163px;width:193px;height:1px;background:#9a9a9a;"></div>
<div class="a" style="left:1053px;top:67px;width:193px;height:1px;background:#a8a8a8;"></div>
<div class="a" style="left:1053px;top:67px;width:1px;height:96px;background:#b8b8b8;"></div>
<div class="a" style="left:1061px;top:75px;width:17px;height:17px;background:#fff;border:1.5px solid #111"></div>
<svg style="left:1058px;top:72px" width="24" height="24"><path d="M1 1 L21 21" stroke="#c0101a" stroke-width="3"/></svg>
<div class="a" style="left:1093px;top:75px;width:16px;height:16px;background:radial-gradient(circle at 50% 55%,#ffe040,#ff5a10 40%,#c01800 75%,#400000);box-shadow:1px 1px 2px rgba(0,0,0,.4)"></div>
<div class="a" style="left:1120px;top:71px;width:24px;height:24px;background:#f2f2ec;border-radius:5px;box-shadow:inset 0 0 0 2px #e4e4dc"></div>
<div class="a" style="left:1125px;top:76px;width:15px;height:15px;background:#5a5a5a;"></div>
<div class="a" style="left:1157px;top:75px;width:16px;height:16px;background:radial-gradient(circle at 45% 45%,#222 15%,#888 25%,#111 40%,#444 60%,#aaa 85%,#333);box-shadow:1px 1px 2px rgba(0,0,0,.4)"></div>
<div class="a" style="left:1189px;top:75px;width:16px;height:16px;background:linear-gradient(160deg,#1848a8,#4a98e8 45%,#2a6ad0 60%,#1d4ca8);box-shadow:1px 1px 2px rgba(0,0,0,.4)"></div>
<div class="a" style="left:1221px;top:75px;width:16px;height:16px;background:#a8a8a8;box-shadow:1px 1px 2px rgba(0,0,0,.4)"></div>
<div class="a" style="left:1061px;top:107px;width:16px;height:16px;background:linear-gradient(135deg,#2a2a2a,#777 55%,#bbb 70%,#888);box-shadow:1px 1px 2px rgba(0,0,0,.4)"></div>
<div class="a" style="left:1093px;top:107px;width:16px;height:16px;background:#6e5e3c;box-shadow:1px 1px 2px rgba(0,0,0,.4)"></div>
<div class="a" style="left:1125px;top:107px;width:16px;height:16px;background:linear-gradient(#5a4a26,#9a8656);box-shadow:1px 1px 2px rgba(0,0,0,.4)"></div>
<div class="a" style="left:1157px;top:107px;width:16px;height:16px;background:repeating-linear-gradient(#c81828 0 3px,#8a90a8 3px 5px,#d81c2c 5px 8px);box-shadow:1px 1px 2px rgba(0,0,0,.4)"></div>
<div class="a" style="left:1189px;top:107px;width:16px;height:16px;background:linear-gradient(150deg,#183048 10%,#f0b020 30%,#3a2860 48%,#60b0d0 65%,#e8d040 80%,#101010);box-shadow:1px 1px 2px rgba(0,0,0,.4)"></div>
<div class="a" style="left:1221px;top:107px;width:16px;height:16px;background:radial-gradient(#8a7a00 38%,#f8e800 45%,#c8b000 90%);box-shadow:1px 1px 2px rgba(0,0,0,.4)"></div>
<div class="a" style="left:1061px;top:139px;width:16px;height:16px;background:linear-gradient(170deg,#a06848,#d88a58 50%,#8a7a38);box-shadow:1px 1px 2px rgba(0,0,0,.4)"></div>
<div class="a" style="left:1093px;top:139px;width:16px;height:16px;background:linear-gradient(#b8dcfc,#6aa8ec);box-shadow:1px 1px 2px rgba(0,0,0,.4)"></div>
<div class="a" style="left:1125px;top:139px;width:16px;height:16px;background:linear-gradient(#e0f4ff 0,#70b0e0 45%,#6a5020 58%,#c08a30 100%);box-shadow:1px 1px 2px rgba(0,0,0,.4)"></div>
<div class="a" style="left:1157px;top:139px;width:16px;height:16px;background:repeating-conic-gradient(from 20deg,#8a8a8a 0 8%,#f0f0f0 0 16%);box-shadow:1px 1px 2px rgba(0,0,0,.4)"></div>
<div class="a" style="left:1189px;top:139px;width:16px;height:15px;background:linear-gradient(#8a7ad0,#6a48a8);box-shadow:3px 3px 3px rgba(0,0,0,.6)"></div>
<div class="a" style="left:1221px;top:139px;width:16px;height:16px;background:#5e5e5e;box-shadow:1px 1px 2px rgba(0,0,0,.4)"></div>
<div class="a" style="left:1258px;top:67px;width:16px;height:96px;background:linear-gradient(90deg,#f0f0f0,#e6e6e6);"></div>
<svg style="left:1262px;top:75px" width="9" height="5"><path d="M0 5 L4.5 0 L9 5Z" fill="#333"/></svg>
<div class="a" style="left:1260px;top:86px;width:11px;height:15px;background:linear-gradient(90deg,#fafafa,#d8d8d8);border:1px solid #a0a0a0;border-radius:2px"></div>
<svg style="left:1262px;top:153px" width="9" height="5"><path d="M0 0 L4.5 5 L9 0Z" fill="#444"/></svg>
<svg style="left:1180px;top:165px" width="12" height="12"><circle cx="6" cy="6" r="4.5" fill="none" stroke="#888" stroke-width="1.5"/><path d="M3 3 L9 9" stroke="#888" stroke-width="1.5"/></svg>
<svg style="left:1210px;top:165px" width="12" height="12"><rect x="1" y="1" width="9" height="9" fill="#eee" stroke="#777"/><rect x="5" y="5" width="5" height="5" fill="#fff" stroke="#555"/></svg>
<svg style="left:1240px;top:164px" width="12" height="13"><path d="M2 4 H10 L9 12 H3Z" fill="#e8e8e8" stroke="#777"/><path d="M1 3 H11 M4 2 H8" stroke="#777"/></svg>
<div class="a" style="left:1272px;top:176px;width:1px;height:1px;background:#777;"></div>
<div class="a" style="left:1270px;top:176px;width:1px;height:1px;background:#777;"></div>
<div class="a" style="left:1268px;top:176px;width:1px;height:1px;background:#777;"></div>
<div class="a" style="left:1266px;top:176px;width:1px;height:1px;background:#777;"></div>
<div class="a" style="left:1264px;top:176px;width:1px;height:1px;background:#777;"></div>
<div class="a" style="left:1272px;top:174px;width:1px;height:1px;background:#777;"></div>
<div class="a" style="left:1270px;top:174px;width:1px;height:1px;background:#777;"></div>
<div class="a" style="left:1268px;top:174px;width:1px;height:1px;background:#777;"></div>
<div class="a" style="left:1266px;top:174px;width:1px;height:1px;background:#777;"></div>
<div class="a" style="left:1272px;top:172px;width:1px;height:1px;background:#777;"></div>
<div class="a" style="left:1270px;top:172px;width:1px;height:1px;background:#777;"></div>
<div class="a" style="left:1268px;top:172px;width:1px;height:1px;background:#777;"></div>
<div class="a" style="left:1272px;top:170px;width:1px;height:1px;background:#777;"></div>
<div class="a" style="left:1270px;top:170px;width:1px;height:1px;background:#777;"></div>
<div class="a" style="left:1272px;top:168px;width:1px;height:1px;background:#777;"></div>
<div class="a" style="left:1052px;top:180px;width:223px;height:1px;background:#3a3a3a;"></div>
<div class="a" style="left:1052px;top:181px;width:223px;height:1px;background:#1e1e1e;"></div>
<div class="a" style="left:1052px;top:182px;width:223px;height:17px;background:linear-gradient(#9a9a9a,#8a8a8a);"></div>
<div class="a" style="left:1052px;top:182px;width:86px;height:18px;background:linear-gradient(#ececec,#dcdcdc);"></div>
<div class="t" style="left:1059px;top:186.87px;font-size:9.6px;color:#333;font-weight:bold;transform:scaleX(1.014);transform-origin:0 0;">ADJUSTMENTS</div>
<div class="a" style="left:1138px;top:182px;width:50px;height:17px;background:linear-gradient(#a8a8a8,#969696);"></div>
<div class="a" style="left:1187px;top:182px;width:1px;height:17px;background:#747474;"></div>
<div class="t" style="left:1146px;top:186.87px;font-size:9.6px;color:#353535;font-weight:bold;transform:scaleX(0.981);transform-origin:0 0;">MASKS</div>
<svg style="left:1257px;top:187px" width="14" height="8"><path d="M0 2 H5 L2.5 5Z" fill="#222"/><path d="M5 0.5 H13 M5 3.5 H13 M5 6.5 H13" stroke="#222" stroke-width="1"/></svg>
<div class="a" style="left:1052px;top:200px;width:223px;height:3px;background:#d9d9d9;"></div>
<div class="a" style="left:1052px;top:203px;width:223px;height:2px;background:#1e1e1e;"></div>
<div class="a" style="left:1052px;top:205px;width:223px;height:17px;background:linear-gradient(#9a9a9a,#8a8a8a);"></div>
<div class="a" style="left:1052px;top:205px;width:50px;height:18px;background:linear-gradient(#ececec,#dcdcdc);"></div>
<div class="t" style="left:1059px;top:209.87px;font-size:9.6px;color:#333;font-weight:bold;transform:scaleX(0.867);transform-origin:0 0;">LAYERS</div>
<div class="a" style="left:1102px;top:205px;width:68px;height:17px;background:linear-gradient(#a8a8a8,#969696);"></div>
<div class="a" style="left:1169px;top:205px;width:1px;height:17px;background:#747474;"></div>
<div class="t" style="left:1110px;top:209.87px;font-size:9.6px;color:#353535;font-weight:bold;transform:scaleX(0.956);transform-origin:0 0;">CHANNELS</div>
<div class="a" style="left:1170px;top:205px;width:46px;height:17px;background:linear-gradient(#a8a8a8,#969696);"></div>
<div class="a" style="left:1215px;top:205px;width:1px;height:17px;background:#747474;"></div>
<div class="t" style="left:1178px;top:209.87px;font-size:9.6px;color:#353535;font-weight:bold;transform:scaleX(0.996);transform-origin:0 0;">PATHS</div>
<svg style="left:1257px;top:210px" width="14" height="8"><path d="M0 2 H5 L2.5 5Z" fill="#222"/><path d="M5 0.5 H13 M5 3.5 H13 M5 6.5 H13" stroke="#222" stroke-width="1"/></svg>
<div class="a" style="left:1052px;top:223px;width:223px;height:723px;background:#d6d6d6;"></div>
<div class="a" style="left:1057px;top:227px;width:115px;height:18px;background:#fff;"></div>
<div class="t" style="left:1061px;top:229.69px;font-size:11px;color:#111;transform:scaleX(0.903);transform-origin:0 0;">Normal</div>
<svg style="left:1159px;top:235px" width="9" height="5"><path d="M0 0 H8 L4 4.5 Z" fill="#111"/></svg>
<div class="t" style="left:1176px;top:229.69px;font-size:11px;color:#222;transform:scaleX(0.942);transform-origin:0 0;">Opacity:</div>
<div class="a" style="left:1217px;top:227px;width:53px;height:18px;background:#cfcfcf;border:1px solid #b8b8b8"></div>
<div class="a" style="left:1218px;top:228px;width:36px;height:16px;background:#fff;"></div>
<div class="t" style="left:1222px;top:230.69px;font-size:11px;color:#111;transform:scaleX(0.889);transform-origin:0 0;">100%</div>
<div class="a" style="left:1254px;top:228px;width:15px;height:16px;background:#e0e0e0;"></div>
<svg style="left:1259px;top:233px" width="5" height="7"><path d="M0 0 L4 3.5 L0 7 Z" fill="#6a7a9a"/></svg>
<div class="a" style="left:1055px;top:247px;width:217px;height:1px;background:#b8b8b8;"></div>
<div class="a" style="left:1055px;top:248px;width:217px;height:1px;background:#eaeaea;"></div>
<div class="t" style="left:1060px;top:255.69px;font-size:11px;color:#222;transform:scaleX(0.989);transform-origin:0 0;">Lock:</div>
<svg style="left:1092px;top:255px" width="12" height="12"><rect x="0.5" y="0.5" width="11" height="11" fill="#fff" stroke="#888"/><rect x="1" y="1" width="5" height="5" fill="#ccc"/><rect x="6" y="6" width="5" height="5" fill="#ccc"/></svg>
<svg style="left:1110px;top:254px" width="14" height="14"><path d="M13 1 L5 9" stroke="#444" stroke-width="1.5"/><path d="M5 8 C2 8 2 12 0 13 C4 13 6 12 6 9Z" fill="#333"/></svg>
<svg style="left:1127px;top:254px" width="13" height="13"><path d="M6.5 0.5 V12.5 M0.5 6.5 H12.5" stroke="#222" stroke-width="1.4"/><path d="M6.5 0 L4 3 H9Z M6.5 13 L4 10 H9Z M0 6.5 L3 4 V9Z M13 6.5 L10 4 V9Z" fill="#222"/></svg>
<svg style="left:1146px;top:254px" width="11" height="13"><path d="M2.5 6 V4 C2.5 1 8.5 1 8.5 4 V6" fill="none" stroke="#333" stroke-width="1.6"/><rect x="1" y="6" width="9" height="7" fill="#333"/></svg>
<div class="t" style="left:1199px;top:255.69px;font-size:11px;color:#222;transform:scaleX(0.994);transform-origin:0 0;">Fill:</div>
<div class="a" style="left:1217px;top:252px;width:53px;height:18px;background:#cfcfcf;border:1px solid #b8b8b8"></div>
<div class="a" style="left:1218px;top:253px;width:36px;height:16px;background:#fff;"></div>
<div class="t" style="left:1222px;top:255.69px;font-size:11px;color:#111;transform:scaleX(0.889);transform-origin:0 0;">100%</div>
<div class="a" style="left:1254px;top:253px;width:15px;height:16px;background:#e0e0e0;"></div>
<svg style="left:1259px;top:258px" width="5" height="7"><path d="M0 0 L4 3.5 L0 7 Z" fill="#6a7a9a"/></svg>
<div class="a" style="left:1055px;top:272px;width:220px;height:1px;background:#aaa;"></div>
<div class="a" style="left:1052px;top:273px;width:206px;height:657px;background:#d6d6d6;"></div>
<div class="a" style="left:1076px;top:273px;width:1px;height:80px;background:#a8a8a8;"></div>
<div class="a" style="left:1077px;top:273px;width:181px;height:40px;background:#3a98f4;"></div>
<div class="a" style="left:1052px;top:312px;width:206px;height:1px;background:#a9a9a9;"></div>
<div class="a" style="left:1052px;top:352px;width:206px;height:1px;background:#9a9a9a;"></div>
<div class="a" style="left:1057px;top:285px;width:15px;height:15px;background:#dcdcdc;border:1px solid #b0b0b0;border-right-color:#eee;border-bottom-color:#eee"></div>
<svg style="left:1058px;top:288px" width="13" height="9"><path d="M0.5 4.5 C3 0 10 0 12.5 4.5 C10 9 3 9 0.5 4.5Z" fill="#fff" stroke="#111" stroke-width="1.2"/><circle cx="6.5" cy="4.5" r="2.6" fill="#111"/></svg>
<div class="a" style="left:1057px;top:325px;width:15px;height:15px;background:#dcdcdc;border:1px solid #b0b0b0;border-right-color:#eee;border-bottom-color:#eee"></div>
<svg style="left:1058px;top:328px" width="13" height="9"><path d="M0.5 4.5 C3 0 10 0 12.5 4.5 C10 9 3 9 0.5 4.5Z" fill="#fff" stroke="#111" stroke-width="1.2"/><circle cx="6.5" cy="4.5" r="2.6" fill="#111"/></svg>
<div class="a" style="left:1078px;top:275px;width:37px;height:37px;background:#000;border:1px solid #fff;box-shadow:0 0 0 1px #0a2050"></div>
<div class="t" style="left:1120px;top:289.69px;font-size:11px;color:#fff;font-weight:bold;transform:scaleX(0.986);transform-origin:0 0;">Layer 1</div>
<div class="a" style="left:1080px;top:316px;width:32px;height:32px;background:radial-gradient(circle at 45% 45%,#3a2018 0,#1a0a08 35%,#000 70%);"></div>
<svg style="left:1084px;top:321px" width="20" height="18"><path d="M3 12 C5 5 10 3 15 5" fill="none" stroke="#c89080" stroke-width="2" opacity=".7"/></svg>
<div class="t" style="left:1120px;top:328.69px;font-size:11px;color:#111;transform:scaleX(1.036);transform-origin:0 0;">Layer 0</div>
<div class="a" style="left:1258px;top:273px;width:17px;height:657px;background:linear-gradient(90deg,#eaeaea,#f4f4f4);"></div>
<svg style="left:1262px;top:283px" width="9" height="5"><path d="M0 5 L4.5 0 L9 5Z" fill="#b0b0b0"/></svg>
<svg style="left:1262px;top:920px" width="9" height="5"><path d="M0 0 L4.5 5 L9 0Z" fill="#a0a0a0"/></svg>
<div class="a" style="left:1052px;top:930px;width:223px;height:1px;background:#8a8a8a;"></div>
<div class="a" style="left:1052px;top:931px;width:223px;height:15px;background:#d6d6d6;"></div>
<svg style="left:1072px;top:934px" width="20" height="10"><rect x="1" y="2" width="9" height="6" rx="3" fill="none" stroke="#777" stroke-width="1.5"/><rect x="9" y="2" width="9" height="6" rx="3" fill="none" stroke="#777" stroke-width="1.5"/></svg>
<div class="t" style="left:1103px;top:933.00px;font-size:13px;color:#333;font-weight:bold;font-style:italic;font-family:"Liberation Serif",serif">fx</div>
<div class="a" style="left:1131px;top:933px;width:14px;height:13px;background:#aaa;border:1px solid #333"></div>
<svg style="left:1133px;top:935px" width="10" height="10"><circle cx="5" cy="5" r="3.5" fill="#fff"/></svg>
<svg style="left:1157px;top:933px" width="14" height="13"><circle cx="6.5" cy="6.5" r="5.5" fill="#ddd" stroke="#333"/><path d="M2.5 10.5 L10.5 2.5 A5.5 5.5 0 0 0 2.5 10.5Z" fill="#222"/></svg>
<svg style="left:1186px;top:933px" width="12" height="12"><rect x="0.5" y="1.5" width="10" height="9" fill="#eee" stroke="#777"/></svg>
<div class="a" style="left:10px;top:55px;width:1px;height:1px;background:#8a8a8a;"></div>
<div class="a" style="left:10px;top:57px;width:1px;height:1px;background:#8a8a8a;"></div>
<div class="a" style="left:12px;top:55px;width:1px;height:1px;background:#8a8a8a;"></div>
<div class="a" style="left:12px;top:57px;width:1px;height:1px;background:#8a8a8a;"></div>
<div class="a" style="left:14px;top:55px;width:1px;height:1px;background:#8a8a8a;"></div>
<div class="a" style="left:14px;top:57px;width:1px;height:1px;background:#8a8a8a;"></div>
<div class="a" style="left:17px;top:55px;width:1px;height:1px;background:#8a8a8a;"></div>
<div class="a" style="left:17px;top:57px;width:1px;height:1px;background:#8a8a8a;"></div>
<div class="a" style="left:19px;top:55px;width:1px;height:1px;background:#8a8a8a;"></div>
<div class="a" style="left:19px;top:57px;width:1px;height:1px;background:#8a8a8a;"></div>
<div class="a" style="left:22px;top:55px;width:1px;height:1px;background:#8a8a8a;"></div>
<div class="a" style="left:22px;top:57px;width:1px;height:1px;background:#8a8a8a;"></div>
<div class="a" style="left:24px;top:55px;width:1px;height:1px;background:#8a8a8a;"></div>
<div class="a" style="left:24px;top:57px;width:1px;height:1px;background:#8a8a8a;"></div>
<div class="a" style="left:26px;top:55px;width:1px;height:1px;background:#8a8a8a;"></div>
<div class="a" style="left:26px;top:57px;width:1px;height:1px;background:#8a8a8a;"></div>
<div class="a" style="left:29px;top:55px;width:1px;height:1px;background:#8a8a8a;"></div>
<div class="a" style="left:29px;top:57px;width:1px;height:1px;background:#8a8a8a;"></div>
<div class="a" style="left:31px;top:55px;width:1px;height:1px;background:#8a8a8a;"></div>
<div class="a" style="left:31px;top:57px;width:1px;height:1px;background:#8a8a8a;"></div>
<div class="a" style="left:34px;top:55px;width:1px;height:1px;background:#8a8a8a;"></div>
<div class="a" style="left:34px;top:57px;width:1px;height:1px;background:#8a8a8a;"></div>
<div class="a" style="left:36px;top:55px;width:1px;height:1px;background:#8a8a8a;"></div>
<div class="a" style="left:36px;top:57px;width:1px;height:1px;background:#8a8a8a;"></div>
<svg style="left:12px;top:63px" width="22" height="22" viewBox="0 0 22 22"><path d="M4 2 L4 14 L7 11 L12 9Z" fill="#444"/><path d="M15 7 V17 M10 12 H20" stroke="#333" stroke-width="1.3"/><path d="M15 6 L13 8.5 H17Z M15 18 L13 15.5 H17Z M9 12 L11.5 10 V14Z M21 12 L18.5 10 V14Z" fill="#333"/></svg>
<svg style="left:12px;top:86px" width="22" height="22" viewBox="0 0 22 22"><ellipse cx="11" cy="10" rx="7.5" ry="6.5" fill="none" stroke="#444" stroke-width="1.4" stroke-dasharray="2.2 1.6"/></svg>
<svg style="left:12px;top:108px" width="22" height="22" viewBox="0 0 22 22"><path d="M3 5 L17 2 L13 13 L9 9 L5 14 Z" fill="none" stroke="#3a3a3a" stroke-width="1.6"/><path d="M5 14 C3 17 7 18 8 16" fill="none" stroke="#3a3a3a" stroke-width="1.3"/></svg>
<svg style="left:12px;top:131px" width="22" height="22" viewBox="0 0 22 22"><path d="M9 9 L18 18" stroke="#333" stroke-width="2.2"/><path d="M7 2 V12 M2 7 H12 M3.5 3.5 L10.5 10.5 M10.5 3.5 L3.5 10.5" stroke="#777" stroke-width="1" stroke-dasharray="1.5 1"/></svg>
<svg style="left:12px;top:154px" width="22" height="22" viewBox="0 0 22 22"><path d="M6 2 V15 H19 M2 6 H15 V19" fill="none" stroke="#3a3a3a" stroke-width="2.4"/><path d="M5 16 L16 5" stroke="#3a3a3a" stroke-width="1.2"/></svg>
<svg style="left:12px;top:177px" width="22" height="22" viewBox="0 0 22 22"><path d="M3 18 L13 8" stroke="#333" stroke-width="4" stroke-linecap="round"/><path d="M3.5 17.5 L13 8" stroke="#f4f4f4" stroke-width="2"/><path d="M11 7 L15 3 L19 7 L15 11Z" fill="#222"/><path d="M15 3 L18 0 L22 4 L19 7" fill="#444"/></svg>
<svg style="left:12px;top:204px" width="22" height="22" viewBox="0 0 22 22"><rect x="2" y="7" width="17" height="7" rx="3.5" transform="rotate(-40 10.5 10.5)" fill="#6a6a6a" stroke="#444"/><rect x="8" y="8.5" width="5" height="4" transform="rotate(-40 10.5 10.5)" fill="#bbb"/></svg>
<svg style="left:12px;top:228px" width="22" height="22" viewBox="0 0 22 22"><path d="M19 2 L9 12" stroke="#555" stroke-width="2"/><path d="M9 11 C4 10 3 16 1 17 C6 18 11 16 10 12Z" fill="#333"/></svg>
<svg style="left:12px;top:251px" width="22" height="22" viewBox="0 0 22 22"><rect x="9" y="2" width="4" height="9" rx="2" fill="#444"/><rect x="3" y="11" width="16" height="4" fill="#555"/><rect x="3" y="15" width="16" height="2" fill="#888"/></svg>
<svg style="left:12px;top:274px" width="22" height="22" viewBox="0 0 22 22"><path d="M18 2 L9 11" stroke="#555" stroke-width="2"/><path d="M9 10 C5 9 4 14 2 15 C6 16 10 14 9.5 11Z" fill="#333"/><path d="M3 6 C6 2 12 2 13 3" fill="none" stroke="#555" stroke-width="1.3"/><path d="M14 16 A6 6 0 0 0 17 12" fill="none" stroke="#777" stroke-dasharray="1.5 1.2"/></svg>
<svg style="left:12px;top:297px" width="22" height="22" viewBox="0 0 22 22"><path d="M2 13 L10 5 L19 9 L11 17Z" fill="#666" stroke="#444"/><path d="M2 13 L11 17 L11 19 L2 15Z" fill="#999"/></svg>
<svg style="left:12px;top:343px" width="22" height="22" viewBox="0 0 22 22"><path d="M11 2 C7 8 5 11 5 14 A6 6 0 0 0 17 14 C17 11 15 8 11 2Z" fill="#777" stroke="#555"/><ellipse cx="9" cy="14" rx="1.5" ry="2.5" fill="#bbb"/></svg>
<svg style="left:12px;top:366px" width="22" height="22" viewBox="0 0 22 22"><circle cx="8" cy="8" r="5.5" fill="#333"/><circle cx="6.5" cy="6.5" r="2" fill="#888"/><path d="M12 12 L19 18" stroke="#333" stroke-width="2.4"/></svg>
<svg style="left:12px;top:393px" width="22" height="22" viewBox="0 0 22 22"><path d="M13 3 L19 9 L11 17 L3 19 L5 11Z" fill="#eee" stroke="#333" stroke-width="1.5"/><path d="M3 19 L9 13" stroke="#333"/><circle cx="9.5" cy="12.5" r="1.3" fill="#333"/><path d="M13 3 L16 0 L22 6 L19 9" fill="#444"/></svg>
<svg style="left:12px;top:416px" width="22" height="22" viewBox="0 0 22 22"><path d="M4 3 H18 V7 H16.5 L16 5 H12.5 V17 L14.5 18 V19 H7.5 V18 L9.5 17 V5 H6 L5.5 7 H4Z" fill="#333"/></svg>
<svg style="left:12px;top:439px" width="22" height="22" viewBox="0 0 22 22"><path d="M5 2 V17 L9 13 L12 19 L14 18 L11 12 L16 12Z" fill="#333"/></svg>
<svg style="left:12px;top:462px" width="22" height="22" viewBox="0 0 22 22"><ellipse cx="11" cy="11" rx="8.5" ry="6" fill="#888" stroke="#444" stroke-width="1.2"/><ellipse cx="10" cy="9" rx="5" ry="2.5" fill="#aaa"/></svg>
<svg style="left:12px;top:489px" width="22" height="22" viewBox="0 0 22 22"><circle cx="13" cy="7" r="4.5" fill="#999" stroke="#444"/><path d="M7 8 C1 10 2 16 11 16 C16 16 19 13 18 11" fill="none" stroke="#333" stroke-width="1.6"/><path d="M8 13 L11 16 L8 19" fill="none" stroke="#333" stroke-width="1.5"/></svg>
<svg style="left:12px;top:512px" width="22" height="22" viewBox="0 0 22 22"><path d="M6 7 C0 10 3 17 11 17 C16 17 19 14 18 11" fill="none" stroke="#333" stroke-width="1.6"/><path d="M8 14 L11 17 L8 20" fill="none" stroke="#333" stroke-width="1.5"/><rect x="13" y="4" width="7" height="3" fill="#444"/><path d="M11 5.5 H14" stroke="#444"/></svg>
<svg style="left:12px;top:535px" width="22" height="22" viewBox="0 0 22 22"><g stroke-linecap="round"><path d="M6 6 L7 13 M9.5 3 V12 M12.5 3.5 V12 M15.5 6 L15 13 M3 11 L7 16" stroke="#222" stroke-width="3.2"/><path d="M6 6 L7 13 M9.5 3 V12 M12.5 3.5 V12 M15.5 6 L15 13 M3 11 L7 16" stroke="#f4f4f4" stroke-width="1.4"/></g><path d="M6.5 12 H15.5 L15 16 C14 19 12 19.5 10 19.5 C8 19.5 6 18 6 16Z" fill="#f4f4f4" stroke="#222" stroke-width="1.1"/></svg>
<svg style="left:12px;top:557px" width="22" height="22" viewBox="0 0 22 22"><circle cx="9" cy="8" r="5" fill="#f0f0f0" stroke="#333" stroke-width="1.6"/><path d="M12.5 11.5 L18 17" stroke="#333" stroke-width="2.4"/></svg>
<svg style="left:30px;top:104px" width="4" height="4"><path d="M4 0 V4 H0Z" fill="#111"/></svg>
<svg style="left:30px;top:126px" width="4" height="4"><path d="M4 0 V4 H0Z" fill="#111"/></svg>
<svg style="left:30px;top:149px" width="4" height="4"><path d="M4 0 V4 H0Z" fill="#111"/></svg>
<svg style="left:30px;top:172px" width="4" height="4"><path d="M4 0 V4 H0Z" fill="#111"/></svg>
<svg style="left:30px;top:195px" width="4" height="4"><path d="M4 0 V4 H0Z" fill="#111"/></svg>
<svg style="left:30px;top:222px" width="4" height="4"><path d="M4 0 V4 H0Z" fill="#111"/></svg>
<svg style="left:30px;top:246px" width="4" height="4"><path d="M4 0 V4 H0Z" fill="#111"/></svg>
<svg style="left:30px;top:269px" width="4" height="4"><path d="M4 0 V4 H0Z" fill="#111"/></svg>
<svg style="left:30px;top:292px" width="4" height="4"><path d="M4 0 V4 H0Z" fill="#111"/></svg>
<svg style="left:30px;top:315px" width="4" height="4"><path d="M4 0 V4 H0Z" fill="#111"/></svg>
<svg style="left:30px;top:361px" width="4" height="4"><path d="M4 0 V4 H0Z" fill="#111"/></svg>
<svg style="left:30px;top:384px" width="4" height="4"><path d="M4 0 V4 H0Z" fill="#111"/></svg>
<svg style="left:30px;top:411px" width="4" height="4"><path d="M4 0 V4 H0Z" fill="#111"/></svg>
<svg style="left:30px;top:434px" width="4" height="4"><path d="M4 0 V4 H0Z" fill="#111"/></svg>
<svg style="left:30px;top:457px" width="4" height="4"><path d="M4 0 V4 H0Z" fill="#111"/></svg>
<svg style="left:30px;top:480px" width="4" height="4"><path d="M4 0 V4 H0Z" fill="#111"/></svg>
<svg style="left:30px;top:507px" width="4" height="4"><path d="M4 0 V4 H0Z" fill="#111"/></svg>
<svg style="left:30px;top:530px" width="4" height="4"><path d="M4 0 V4 H0Z" fill="#111"/></svg>
<svg style="left:30px;top:553px" width="4" height="4"><path d="M4 0 V4 H0Z" fill="#111"/></svg>
<div class="a" style="left:9px;top:319px;width:28px;height:23px;background:linear-gradient(#e6e6e6,#c8c8c8);border:1px solid #6a6a6a;border-radius:3px"></div>
<svg style="left:12px;top:320px" width="22" height="22" viewBox="0 0 22 22">
<path d="M4 11 L10 5 L17 12 L11 18 Z" fill="#8a8a8a" stroke="#333" stroke-width="1.2"/>
<path d="M5 12 L11 17" stroke="#ccc" stroke-width="2"/>
<path d="M8 8 C7 2 12 1 12 5 L12 11" fill="none" stroke="#333" stroke-width="1.2"/>
<path d="M15 10 C19 11 20 14 19 17" fill="none" stroke="#222" stroke-width="1.5"/>
<ellipse cx="19" cy="18" rx="1.6" ry="2" fill="#222"/></svg>
<svg style="left:30px;top:336px" width="4" height="4"><path d="M4 0 V4 H0Z" fill="#111"/></svg>
<div class="a" style="left:9px;top:201px;width:28px;height:1px;background:#9c9c9c;"></div>
<div class="a" style="left:9px;top:202px;width:28px;height:1px;background:#f0f0f0;"></div>
<div class="a" style="left:9px;top:390px;width:28px;height:1px;background:#9c9c9c;"></div>
<div class="a" style="left:9px;top:391px;width:28px;height:1px;background:#f0f0f0;"></div>
<div class="a" style="left:9px;top:486px;width:28px;height:1px;background:#9c9c9c;"></div>
<div class="a" style="left:9px;top:487px;width:28px;height:1px;background:#f0f0f0;"></div>
<div class="a" style="left:12px;top:587px;width:7px;height:7px;background:#fff;border:1px solid #222"></div>
<div class="a" style="left:9px;top:584px;width:7px;height:7px;background:linear-gradient(135deg,#444,#000);"></div>
<svg style="left:26px;top:584px" width="11" height="11"><path d="M2 2 C6 2 8 5 8 9" fill="none" stroke="#333" stroke-width="1.4"/><path d="M0 2 L3 -0.5 V4.5Z M8 11 L5.5 8 H10.5Z" fill="#333"/></svg>
<div class="a" style="left:18px;top:609px;width:20px;height:20px;background:#fff;"></div>
<div class="a" style="left:9px;top:600px;width:18px;height:18px;background:#000;box-shadow:0 0 0 1px #fff"></div>
<div class="a" style="left:14px;top:636px;width:17px;height:13px;background:#f8f8f8;border:1px solid #222;border-top-color:#888;border-left-color:#888"></div>
<svg style="left:17px;top:637px" width="10" height="10"><circle cx="5.5" cy="5.5" r="3.8" fill="#fff" stroke="#333"/></svg>
<div class="a" style="left:1021px;top:55px;width:1px;height:1px;background:#9a9a9a;"></div>
<div class="a" style="left:1021px;top:57px;width:1px;height:1px;background:#9a9a9a;"></div>
<div class="a" style="left:1023px;top:55px;width:1px;height:1px;background:#9a9a9a;"></div>
<div class="a" style="left:1023px;top:57px;width:1px;height:1px;background:#9a9a9a;"></div>
<div class="a" style="left:1025px;top:55px;width:1px;height:1px;background:#9a9a9a;"></div>
<div class="a" style="left:1025px;top:57px;width:1px;height:1px;background:#9a9a9a;"></div>
<div class="a" style="left:1027px;top:55px;width:1px;height:1px;background:#9a9a9a;"></div>
<div class="a" style="left:1027px;top:57px;width:1px;height:1px;background:#9a9a9a;"></div>
<div class="a" style="left:1029px;top:55px;width:1px;height:1px;background:#9a9a9a;"></div>
<div class="a" style="left:1029px;top:57px;width:1px;height:1px;background:#9a9a9a;"></div>
<div class="a" style="left:1032px;top:55px;width:1px;height:1px;background:#9a9a9a;"></div>
<div class="a" style="left:1032px;top:57px;width:1px;height:1px;background:#9a9a9a;"></div>
<div class="a" style="left:1034px;top:55px;width:1px;height:1px;background:#9a9a9a;"></div>
<div class="a" style="left:1034px;top:57px;width:1px;height:1px;background:#9a9a9a;"></div>
<div class="a" style="left:1036px;top:55px;width:1px;height:1px;background:#9a9a9a;"></div>
<div class="a" style="left:1036px;top:57px;width:1px;height:1px;background:#9a9a9a;"></div>
<div class="a" style="left:1038px;top:55px;width:1px;height:1px;background:#9a9a9a;"></div>
<div class="a" style="left:1038px;top:57px;width:1px;height:1px;background:#9a9a9a;"></div>
<div class="a" style="left:1040px;top:55px;width:1px;height:1px;background:#9a9a9a;"></div>
<div class="a" style="left:1040px;top:57px;width:1px;height:1px;background:#9a9a9a;"></div>
<div class="a" style="left:1043px;top:55px;width:1px;height:1px;background:#9a9a9a;"></div>
<div class="a" style="left:1043px;top:57px;width:1px;height:1px;background:#9a9a9a;"></div>
<div class="a" style="left:1045px;top:55px;width:1px;height:1px;background:#9a9a9a;"></div>
<div class="a" style="left:1045px;top:57px;width:1px;height:1px;background:#9a9a9a;"></div>
<div class="a" style="left:1021px;top:98px;width:1px;height:1px;background:#9a9a9a;"></div>
<div class="a" style="left:1021px;top:100px;width:1px;height:1px;background:#9a9a9a;"></div>
<div class="a" style="left:1023px;top:98px;width:1px;height:1px;background:#9a9a9a;"></div>
<div class="a" style="left:1023px;top:100px;width:1px;height:1px;background:#9a9a9a;"></div>
<div class="a" style="left:1025px;top:98px;width:1px;height:1px;background:#9a9a9a;"></div>
<div class="a" style="left:1025px;top:100px;width:1px;height:1px;background:#9a9a9a;"></div>
<div class="a" style="left:1027px;top:98px;width:1px;height:1px;background:#9a9a9a;"></div>
<div class="a" style="left:1027px;top:100px;width:1px;height:1px;background:#9a9a9a;"></div>
<div class="a" style="left:1029px;top:98px;width:1px;height:1px;background:#9a9a9a;"></div>
<div class="a" style="left:1029px;top:100px;width:1px;height:1px;background:#9a9a9a;"></div>
<div class="a" style="left:1032px;top:98px;width:1px;height:1px;background:#9a9a9a;"></div>
<div class="a" style="left:1032px;top:100px;width:1px;height:1px;background:#9a9a9a;"></div>
<div class="a" style="left:1034px;top:98px;width:1px;height:1px;background:#9a9a9a;"></div>
<div class="a" style="left:1034px;top:100px;width:1px;height:1px;background:#9a9a9a;"></div>
<div class="a" style="left:1036px;top:98px;width:1px;height:1px;background:#9a9a9a;"></div>
<div class="a" style="left:1036px;top:100px;width:1px;height:1px;background:#9a9a9a;"></div>
<div class="a" style="left:1038px;top:98px;width:1px;height:1px;background:#9a9a9a;"></div>
<div class="a" style="left:1038px;top:100px;width:1px;height:1px;background:#9a9a9a;"></div>
<div class="a" style="left:1040px;top:98px;width:1px;height:1px;background:#9a9a9a;"></div>
<div class="a" style="left:1040px;top:100px;width:1px;height:1px;background:#9a9a9a;"></div>
<div class="a" style="left:1043px;top:98px;width:1px;height:1px;background:#9a9a9a;"></div>
<div class="a" style="left:1043px;top:100px;width:1px;height:1px;background:#9a9a9a;"></div>
<div class="a" style="left:1045px;top:98px;width:1px;height:1px;background:#9a9a9a;"></div>
<div class="a" style="left:1045px;top:100px;width:1px;height:1px;background:#9a9a9a;"></div>
<div class="a" style="left:1021px;top:172px;width:1px;height:1px;background:#9a9a9a;"></div>
<div class="a" style="left:1021px;top:174px;width:1px;height:1px;background:#9a9a9a;"></div>
<div class="a" style="left:1023px;top:172px;width:1px;height:1px;background:#9a9a9a;"></div>
<div class="a" style="left:1023px;top:174px;width:1px;height:1px;background:#9a9a9a;"></div>
<div class="a" style="left:1025px;top:172px;width:1px;height:1px;background:#9a9a9a;"></div>
<div class="a" style="left:1025px;top:174px;width:1px;height:1px;background:#9a9a9a;"></div>
<div class="a" style="left:1027px;top:172px;width:1px;height:1px;background:#9a9a9a;"></div>
<div class="a" style="left:1027px;top:174px;width:1px;height:1px;background:#9a9a9a;"></div>
<div class="a" style="left:1029px;top:172px;width:1px;height:1px;background:#9a9a9a;"></div>
<div class="a" style="left:1029px;top:174px;width:1px;height:1px;background:#9a9a9a;"></div>
<div class="a" style="left:1032px;top:172px;width:1px;height:1px;background:#9a9a9a;"></div>
<div class="a" style="left:1032px;top:174px;width:1px;height:1px;background:#9a9a9a;"></div>
<div class="a" style="left:1034px;top:172px;width:1px;height:1px;background:#9a9a9a;"></div>
<div class="a" style="left:1034px;top:174px;width:1px;height:1px;background:#9a9a9a;"></div>
<div class="a" style="left:1036px;top:172px;width:1px;height:1px;background:#9a9a9a;"></div>
<div class="a" style="left:1036px;top:174px;width:1px;height:1px;background:#9a9a9a;"></div>
<div class="a" style="left:1038px;top:172px;width:1px;height:1px;background:#9a9a9a;"></div>
<div class="a" style="left:1038px;top:174px;width:1px;height:1px;background:#9a9a9a;"></div>
<div class="a" style="left:1040px;top:172px;width:1px;height:1px;background:#9a9a9a;"></div>
<div class="a" style="left:1040px;top:174px;width:1px;height:1px;background:#9a9a9a;"></div>
<div class="a" style="left:1043px;top:172px;width:1px;height:1px;background:#9a9a9a;"></div>
<div class="a" style="left:1043px;top:174px;width:1px;height:1px;background:#9a9a9a;"></div>
<div class="a" style="left:1045px;top:172px;width:1px;height:1px;background:#9a9a9a;"></div>
<div class="a" style="left:1045px;top:174px;width:1px;height:1px;background:#9a9a9a;"></div>
<div class="a" style="left:1021px;top:306px;width:1px;height:1px;background:#9a9a9a;"></div>
<div class="a" style="left:1021px;top:308px;width:1px;height:1px;background:#9a9a9a;"></div>
<div class="a" style="left:1023px;top:306px;width:1px;height:1px;background:#9a9a9a;"></div>
<div class="a" style="left:1023px;top:308px;width:1px;height:1px;background:#9a9a9a;"></div>
<div class="a" style="left:1025px;top:306px;width:1px;height:1px;background:#9a9a9a;"></div>
<div class="a" style="left:1025px;top:308px;width:1px;height:1px;background:#9a9a9a;"></div>
<div class="a" style="left:1027px;top:306px;width:1px;height:1px;background:#9a9a9a;"></div>
<div class="a" style="left:1027px;top:308px;width:1px;height:1px;background:#9a9a9a;"></div>
<div class="a" style="left:1029px;top:306px;width:1px;height:1px;background:#9a9a9a;"></div>
<div class="a" style="left:1029px;top:308px;width:1px;height:1px;background:#9a9a9a;"></div>
<div class="a" style="left:1032px;top:306px;width:1px;height:1px;background:#9a9a9a;"></div>
<div class="a" style="left:1032px;top:308px;width:1px;height:1px;background:#9a9a9a;"></div>
<div class="a" style="left:1034px;top:306px;width:1px;height:1px;background:#9a9a9a;"></div>
<div class="a" style="left:1034px;top:308px;width:1px;height:1px;background:#9a9a9a;"></div>
<div class="a" style="left:1036px;top:306px;width:1px;height:1px;background:#9a9a9a;"></div>
<div class="a" style="left:1036px;top:308px;width:1px;height:1px;background:#9a9a9a;"></div>
<div class="a" style="left:1038px;top:306px;width:1px;height:1px;background:#9a9a9a;"></div>
<div class="a" style="left:1038px;top:308px;width:1px;height:1px;background:#9a9a9a;"></div>
<div class="a" style="left:1040px;top:306px;width:1px;height:1px;background:#9a9a9a;"></div>
<div class="a" style="left:1040px;top:308px;width:1px;height:1px;background:#9a9a9a;"></div>
<div class="a" style="left:1043px;top:306px;width:1px;height:1px;background:#9a9a9a;"></div>
<div class="a" style="left:1043px;top:308px;width:1px;height:1px;background:#9a9a9a;"></div>
<div class="a" style="left:1045px;top:306px;width:1px;height:1px;background:#9a9a9a;"></div>
<div class="a" style="left:1045px;top:308px;width:1px;height:1px;background:#9a9a9a;"></div>
<svg style="left:1024px;top:66px" width="18" height="18"><path d="M1 3 H7 L9 5 H17 V17 H1Z" fill="#ddd" stroke="#222" stroke-width="1.2"/><text x="2" y="14.5" font-family="Liberation Sans" font-size="10" font-weight="bold" fill="#222">Mb</text></svg>
<svg style="left:1025px;top:110px" width="18" height="20"><rect x="1" y="1" width="4" height="4" fill="#fff" stroke="#333"/><rect x="1" y="7" width="4" height="4" fill="#fff" stroke="#333"/><rect x="1" y="13" width="4" height="4" fill="#555"/><path d="M9 5 C15 4 16 10 12 15" fill="none" stroke="#444" stroke-width="2"/><path d="M8 2 L11 5 L8 7Z" fill="#444"/></svg>
<svg style="left:1024px;top:141px" width="18" height="13"><rect x="0.5" y="0.5" width="17" height="12" fill="#eee" stroke="#444"/><path d="M4 2.5 L14 6.5 L4 10.5Z" fill="#444"/></svg>
<svg style="left:1024px;top:183px" width="18" height="18"><path d="M2 16 L16 2" stroke="#333" stroke-width="2"/><path d="M2 16 L7 11" stroke="#222" stroke-width="3.5"/><path d="M3 3 L15 15" stroke="#444" stroke-width="2"/><circle cx="3.5" cy="3.5" r="2.5" fill="none" stroke="#444" stroke-width="1.5"/></svg>
<svg style="left:1024px;top:214px" width="18" height="18"><path d="M9 1 V7" stroke="#555"/><path d="M3 10 L9 7 L15 10 L9 13Z" fill="#777"/><path d="M3 10 V14 L9 17 V13Z" fill="#222"/><path d="M15 10 V14 L9 17 V13Z" fill="#444"/></svg>
<div class="t" style="left:1026px;top:244.61px;font-size:17px;color:#3a3a3a;">A</div>
<div class="a" style="left:1039px;top:244px;width:1px;height:17px;background:#222;"></div>
<div class="t" style="left:1026px;top:275.61px;font-size:17px;color:#3a3a3a;font-weight:bold;">¶</div>
<svg style="left:1023px;top:318px" width="20" height="16"><path d="M10 3 H19 M10 11 H19" stroke="#444" stroke-width="1.5"/><path d="M1 3 C4 0 8 2 10 3 C8 4 4 6 1 3Z" fill="#333"/><path d="M1 11 C4 8 8 10 10 11 C8 12 4 14 1 11Z" fill="#333"/></svg>
<svg style="left:1025px;top:345px" width="18" height="20"><rect x="4" y="11" width="9" height="8" fill="#fff" stroke="#222" stroke-width="1.6"/><path d="M6 11 L3 2 M9 11 V4 M11 11 L15 3" stroke="#333" stroke-width="1.5"/><circle cx="3" cy="3" r="2" fill="#333"/><circle cx="15" cy="3" r="2" fill="#333"/></svg>
<svg style="left:1023px;top:376px" width="20" height="18"><path d="M0 2 H4 M0 5 H4 M0 8 H4" stroke="#444" stroke-dasharray="1 1"/><rect x="9" y="2" width="4" height="7" rx="2" fill="#444"/><rect x="4" y="9" width="15" height="4" fill="#555"/><rect x="4" y="13" width="15" height="2" fill="#888"/></svg>
<div class="a" style="left:404px;top:62px;width:360px;height:393px;border-radius:7px 7px 5px 5px;border:1px solid #151515;overflow:hidden;box-shadow:0 3px 14px 2px rgba(0,0,0,.45);
background:linear-gradient(180deg,#d4dfea 0,#c4d2e0 29px,#bcc8d4 54px,#4a4e52 63px,#6a7074 80px,#c4c8cc 115px,#2a2e30 117px,#1c1f21 200px,#15181a 100%)">
<div class="a" style="left:0;top:0;width:358px;height:29px;background:linear-gradient(180deg,#dfe8f2 0,#cbd8e6 12px,#b4c6d8 20px,#c2d0de 28px)"></div>
<div class="a" style="left:90px;top:2px;width:260px;height:26px;background:radial-gradient(ellipse 50% 60% at 45% 55%,rgba(120,150,180,.55),rgba(120,150,180,0) 100%)"></div>
<div class="a" style="left:0;top:0;right:0;bottom:0;border:1px solid rgba(255,255,255,.75);border-radius:6px 6px 4px 4px"></div>
</div>
<div class="t" style="left:412px;top:70.84px;font-size:12px;color:#111;transform:scaleX(0.917);transform-origin:0 0;">Lens Flare</div>
<div class="a" style="left:710px;top:63px;width:47px;height:19px;border:1px solid #5a2a22;border-top:none;border-radius:0 0 4px 4px;
background:linear-gradient(#e8a090 0,#d8705a 45%,#c23a1e 50%,#c8482a 80%,#e07858 100%);box-shadow:inset 0 0 0 1px rgba(255,200,190,.5)"></div>
<svg style="left:728px;top:67px" width="12" height="10"><path d="M2 1.5 L10 8.5 M10 1.5 L2 8.5" stroke="#5a3a36" stroke-width="3.6"/><path d="M2 1.5 L10 8.5 M10 1.5 L2 8.5" stroke="#fff" stroke-width="2"/></svg>
<div class="a" style="left:410px;top:91px;width:348px;height:358px;background:#f0f0f0;border:1px solid #151515;box-shadow:inset -1px -1px 0 #fff,0 0 0 1px rgba(170,180,185,.55)"></div>
<div class="a" style="left:420px;top:100px;width:170px;height:207px;background:#ababab;border-top:1px solid #6e6e6e;border-left:1px solid #6e6e6e;border-right:1px solid #fff;border-bottom:1px solid #fff"></div>
<div class="a" style="left:446px;top:145px;width:121px;height:120px;background:#000;"></div>
<svg style="left:447px;top:146px" width="118" height="118" viewBox="0 0 118 118">
<defs>
<radialGradient id="glow" cx="81.5" cy="54.5" r="46" gradientUnits="userSpaceOnUse">
<stop offset="0" stop-color="#fff"/><stop offset=".07" stop-color="#fafcff"/><stop offset=".16" stop-color="#c0c8e4" stop-opacity=".85"/><stop offset=".28" stop-color="#707a9c" stop-opacity=".45"/><stop offset=".45" stop-color="#3a4058" stop-opacity=".22"/><stop offset=".75" stop-color="#20202a" stop-opacity=".1"/><stop offset="1" stop-color="#000" stop-opacity="0"/></radialGradient>
<radialGradient id="halo" cx="60" cy="58" r="50" gradientUnits="userSpaceOnUse">
<stop offset="0" stop-color="#4a3e30" stop-opacity=".5"/><stop offset=".7" stop-color="#2a2018" stop-opacity=".4"/><stop offset="1" stop-color="#000" stop-opacity="0"/></radialGradient>
<radialGradient id="grn" cx="14" cy="66" r="8" gradientUnits="userSpaceOnUse"><stop offset="0" stop-color="#2e3a22"/><stop offset="1" stop-color="#000" stop-opacity="0"/></radialGradient>
</defs>
<rect width="118" height="118" fill="#050506"/>
<ellipse cx="70" cy="56" rx="50" ry="40" fill="url(#halo)" opacity=".7"/>
<circle cx="14" cy="66" r="8" fill="url(#grn)"/><circle cx="14" cy="66" r="6" fill="none" stroke="#2a3020" stroke-width="1.5" opacity=".35"/>
<circle cx="81.5" cy="54.5" r="46" fill="url(#glow)"/>
<path d="M61 26 L59 86" stroke="#b0a090" stroke-width="1" opacity=".75"/>
<path d="M60 54 L80 55" stroke="#c0c8d8" stroke-width="1" opacity=".6"/>
<path d="M25 63 L60 56" stroke="#6a5a3a" stroke-width=".8" opacity=".6"/>
<circle cx="28" cy="63" r="1" fill="#c0b070"/><circle cx="45" cy="60" r="1" fill="#a09060"/>
<path d="M78.5 54.5 H84.5 M81.5 51.5 V57.5" stroke="#000" stroke-width="1.2"/>
</svg>
<div class="a" style="left:565px;top:146px;width:1px;height:118px;background:#e8e8e8;"></div>
<div class="a" style="left:447px;top:263px;width:119px;height:1px;background:#e8e8e8;"></div>
<svg style="left:538px;top:258px" width="14" height="20"><path d="M1 1 V15 L4.5 11.5 L7.5 18 L10 17 L7 10.5 H12Z" fill="#fff" stroke="#111" stroke-width="1"/></svg>
<div class="a" style="left:605px;top:105px;width:138px;height:20px;border:1px solid #2c78a8;border-radius:3px;background:linear-gradient(#f0f4f8 0,#e8eef3 50%,#dae2e9 51%,#ccd8e0 100%);box-shadow:inset 0 0 0 1px #5ed8fa,inset 0 0 0 2px #a8ecfc"></div>
<div class="t" style="left:666px;top:109.84px;font-size:12px;color:#111;transform:scaleX(0.980);transform-origin:0 0;">OK</div>
<div class="a" style="left:605px;top:135px;width:138px;height:20px;border:1px solid #707070;border-radius:3px;background:linear-gradient(#f2f2f2 0,#ebebeb 50%,#dddddd 51%,#cfcfcf 100%);box-shadow:inset 0 0 0 1px #fcfcfc"></div>
<div class="t" style="left:656px;top:139.84px;font-size:12px;color:#111;transform:scaleX(0.964);transform-origin:0 0;">Cancel</div>
<div class="t" style="left:433px;top:321.69px;font-size:11px;color:#111;transform:scaleX(0.981);transform-origin:0 0;">Brightness:</div>
<div class="a" style="left:534px;top:318px;width:31px;height:18px;background:#fff;border:1px solid #e0e0e0"></div>
<div class="t" style="left:537px;top:321.69px;font-size:11px;color:#111;transform:scaleX(0.926);transform-origin:0 0;">100</div>
<div class="t" style="left:572px;top:321.69px;font-size:11px;color:#111;transform:scaleX(0.920);transform-origin:0 0;">%</div>
<div class="a" style="left:432px;top:343px;width:146px;height:1px;background:#a0a0a0;"></div>
<div class="a" style="left:432px;top:344px;width:146px;height:1px;background:#fff;"></div>
<svg style="left:474px;top:338px" width="10" height="11"><path d="M1 4.5 L4.5 1 L8 4.5 V10 H1Z" fill="#d8f0dc" stroke="#3a8a4a" stroke-width="1"/><path d="M2 8 H7 V10 H2Z" fill="#4aa05a"/></svg>
<div class="a" style="left:420px;top:365px;width:171px;height:73px;border:1px solid #dcdcdc;border-radius:3px;box-shadow:inset 0 0 0 1px #fff"></div>
<div class="a" style="left:433px;top:362px;width:56px;height:10px;background:#f0f0f0;"></div>
<div class="t" style="left:436px;top:361.69px;font-size:11px;color:#111;transform:scaleX(0.969);transform-origin:0 0;">Lens Type</div>
<svg style="left:423px;top:375px" width="12" height="12"><defs><linearGradient id="rg0" x1="0" y1="0" x2="1" y2="1"><stop offset="0" stop-color="#cfcfcf"/><stop offset="1" stop-color="#f8f8f8"/></linearGradient></defs><circle cx="6" cy="6" r="5.5" fill="url(#rg0)" stroke="#8a8a8a"/></svg>
<div class="t" style="left:439px;top:375.69px;font-size:11px;color:#111;transform:scaleX(0.943);transform-origin:0 0;">50-300mm Zoom</div>
<svg style="left:423px;top:390px" width="12" height="12"><defs><linearGradient id="rg1" x1="0" y1="0" x2="1" y2="1"><stop offset="0" stop-color="#cfcfcf"/><stop offset="1" stop-color="#f8f8f8"/></linearGradient></defs><circle cx="6" cy="6" r="5.5" fill="url(#rg1)" stroke="#8a8a8a"/></svg>
<div class="t" style="left:439px;top:390.69px;font-size:11px;color:#111;transform:scaleX(0.914);transform-origin:0 0;">35mm Prime</div>
<svg style="left:423px;top:405px" width="12" height="12"><circle cx="6" cy="6" r="5.5" fill="#f4f4f4" stroke="#8a8a8a"/><circle cx="6" cy="6" r="3.3" fill="#2a6a8a"/><circle cx="5.5" cy="5.3" r="1.3" fill="#8ad0f0"/></svg>
<div class="t" style="left:439px;top:405.69px;font-size:11px;color:#111;transform:scaleX(0.920);transform-origin:0 0;">105mm Prime</div>
<svg style="left:423px;top:420px" width="12" height="12"><defs><linearGradient id="rg3" x1="0" y1="0" x2="1" y2="1"><stop offset="0" stop-color="#cfcfcf"/><stop offset="1" stop-color="#f8f8f8"/></linearGradient></defs><circle cx="6" cy="6" r="5.5" fill="url(#rg3)" stroke="#8a8a8a"/></svg>
<div class="t" style="left:439px;top:420.69px;font-size:11px;color:#111;transform:scaleX(0.933);transform-origin:0 0;">Movie Prime</div>
<svg style="left:1186px;top:932px" width="14" height="12"><path d="M1 3 H5 L6 1.5 H12 V11 H1Z" fill="#eee" stroke="#333"/></svg>
<svg style="left:1212px;top:933px" width="12" height="12"><rect x="0.5" y="0.5" width="10" height="10" fill="#eee" stroke="#222"/></svg>
<svg style="left:1240px;top:932px" width="12" height="13"><path d="M2 4 H10 L9 12 H3Z" fill="#ddd" stroke="#333"/><path d="M1 3 H11" stroke="#333"/></svg>
<div class="t" style="left:1193px;top:927px;font-family:'Liberation Mono',monospace;font-size:14px;font-weight:bold;color:#fff;transform:scaleX(1.05);transform-origin:0 0;text-shadow:1px 1px 0 rgba(60,60,60,.6)">mycity.rs</div></body></html>
